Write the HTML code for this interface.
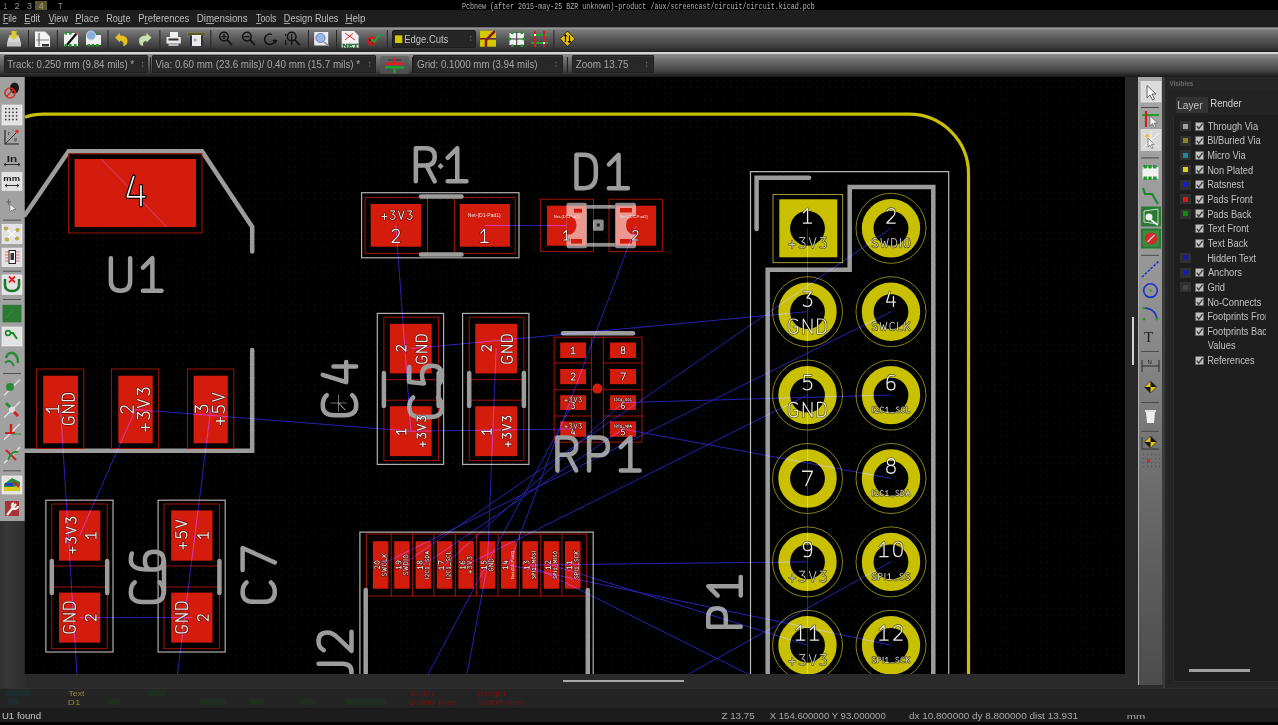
<!DOCTYPE html>
<html><head><meta charset="utf-8"><style>
*{margin:0;padding:0;box-sizing:border-box}
html,body{width:1278px;height:725px;overflow:hidden;background:#000;font-family:"Liberation Sans",sans-serif}
.b{position:absolute}
.t{position:absolute;white-space:pre;line-height:1}
.menu{font-size:10.5px;color:#d6d6d6}
.menu u{text-decoration:underline}
</style></head><body>
<div class="b" style="left:0px;top:0px;width:1278px;height:10px;background:#000"></div>
<div class="b" style="left:35px;top:1px;width:12px;height:9px;background:#5a5630"></div>
<div class="b" style="left:0px;top:10px;width:1278px;height:16.5px;background:#1e1e1e"></div>
<div class="b" style="left:0px;top:26.5px;width:1278px;height:26px;background:linear-gradient(#3a3a3a 0px,#a0a0a0 1px,#7a7a7a 3px,#5e5e5e 10px,#3c3c3c 20px,#262626 24px,#1c1c1c 26px)"></div>
<div class="b" style="left:0px;top:52px;width:1278px;height:1.6px;background:#d4d4d4"></div>
<div class="b" style="left:0px;top:54px;width:1278px;height:23px;background:linear-gradient(#8e8e8e 0px,#6e6e6e 6px,#444 17px,#262626 21px,#1a1a1a 23px)"></div>
<div class="b" style="left:4px;top:55.2px;width:144px;height:17.5px;background:#282828;border:1px solid #202020;border-radius:1px;box-shadow:inset 0 1px 0 #333"></div>
<div class="b" style="left:151.5px;top:55.2px;width:224.0px;height:17.5px;background:#282828;border:1px solid #202020;border-radius:1px;box-shadow:inset 0 1px 0 #333"></div>
<div class="b" style="left:413px;top:55.2px;width:149.5px;height:17.5px;background:#282828;border:1px solid #202020;border-radius:1px;box-shadow:inset 0 1px 0 #333"></div>
<div class="b" style="left:572px;top:55.2px;width:82px;height:17.5px;background:#282828;border:1px solid #202020;border-radius:1px;box-shadow:inset 0 1px 0 #333"></div>
<div class="b" style="left:149.5px;top:57px;width:1px;height:16px;background:#1e1e1e"></div>
<div class="b" style="left:411.5px;top:57px;width:1px;height:16px;background:#1e1e1e"></div>
<div class="b" style="left:567px;top:57px;width:1px;height:16px;background:#1e1e1e"></div>
<div class="b" style="left:380px;top:55.5px;width:28.5px;height:18px;background:linear-gradient(#666,#4a4a4a);border-radius:2px"></div>
<div class="b" style="left:391.5px;top:30px;width:84.5px;height:17.6px;background:#262626;border:1px solid #1c1c1c;border-radius:2px"></div>
<div class="b" style="left:0px;top:77px;width:24.5px;height:443.5px;background:#a2a2a2"></div>
<div class="b" style="left:0px;top:520.5px;width:24.5px;height:167.5px;background:linear-gradient(90deg,#303030,#383838 8px,#2e2e2e 24px)"></div>
<div class="b" style="left:1125px;top:77px;width:12.5px;height:611px;background:#282828"></div>
<div class="b" style="left:24.5px;top:674px;width:1113px;height:14px;background:#2a2a2a"></div>
<div class="b" style="left:1137.5px;top:77px;width:25px;height:608px;background:linear-gradient(#a6a6a6 0%,#949494 35%,#747474 60%,#5e5e5e 80%,#4c4c4c 100%);border-left:1px solid #b4b4b4;border-right:1px solid #3a3a3a"></div>
<div class="b" style="left:1137.5px;top:685px;width:25px;height:3px;background:#2a2a2a"></div>
<div class="b" style="left:1162.5px;top:77px;width:115.5px;height:611px;background:#262626"></div>
<div class="b" style="left:1162.5px;top:77px;width:2px;height:611px;background:#3a3a3a"></div>
<div class="b" style="left:1167.5px;top:91px;width:110.5px;height:593px;background:#232323"></div>
<div class="b" style="left:1173px;top:115px;width:105px;height:567px;background:#1e1e1e;border-left:1px solid #2c2c2c;border-bottom:1px solid #2c2c2c"></div>
<div class="b" style="left:1176px;top:97px;width:32px;height:16px;background:#333"></div>
<div class="b" style="left:1180px;top:121.0px;width:11px;height:10px;background:#303030"></div>
<div class="b" style="left:1183px;top:123.5px;width:5px;height:5px;background:#a0a0a0"></div>
<div class="b" style="left:1195px;top:121.5px;width:9px;height:9px;background:#c0c0c0;border:1px solid #6a6a6a;border-radius:1px"></div>
<div class="b" style="left:1180px;top:135.65px;width:11px;height:10px;background:#303030"></div>
<div class="b" style="left:1183px;top:138.15px;width:5px;height:5px;background:#8a8420"></div>
<div class="b" style="left:1195px;top:136.15px;width:9px;height:9px;background:#c0c0c0;border:1px solid #6a6a6a;border-radius:1px"></div>
<div class="b" style="left:1180px;top:150.3px;width:11px;height:10px;background:#303030"></div>
<div class="b" style="left:1183px;top:152.8px;width:5px;height:5px;background:#1a8a98"></div>
<div class="b" style="left:1195px;top:150.8px;width:9px;height:9px;background:#c0c0c0;border:1px solid #6a6a6a;border-radius:1px"></div>
<div class="b" style="left:1180px;top:164.95px;width:11px;height:10px;background:#303030"></div>
<div class="b" style="left:1183px;top:167.45px;width:5px;height:5px;background:#d8d020"></div>
<div class="b" style="left:1195px;top:165.45px;width:9px;height:9px;background:#c0c0c0;border:1px solid #6a6a6a;border-radius:1px"></div>
<div class="b" style="left:1180px;top:179.6px;width:11px;height:10px;background:#303030"></div>
<div class="b" style="left:1183px;top:182.1px;width:5px;height:5px;background:#1818d8"></div>
<div class="b" style="left:1195px;top:180.1px;width:9px;height:9px;background:#c0c0c0;border:1px solid #6a6a6a;border-radius:1px"></div>
<div class="b" style="left:1180px;top:194.25px;width:11px;height:10px;background:#303030"></div>
<div class="b" style="left:1183px;top:196.75px;width:5px;height:5px;background:#d81818"></div>
<div class="b" style="left:1195px;top:194.75px;width:9px;height:9px;background:#c0c0c0;border:1px solid #6a6a6a;border-radius:1px"></div>
<div class="b" style="left:1180px;top:208.9px;width:11px;height:10px;background:#303030"></div>
<div class="b" style="left:1183px;top:211.4px;width:5px;height:5px;background:#108a10"></div>
<div class="b" style="left:1195px;top:209.4px;width:9px;height:9px;background:#c0c0c0;border:1px solid #6a6a6a;border-radius:1px"></div>
<div class="b" style="left:1195px;top:224.05px;width:9px;height:9px;background:#c0c0c0;border:1px solid #6a6a6a;border-radius:1px"></div>
<div class="b" style="left:1195px;top:238.7px;width:9px;height:9px;background:#c0c0c0;border:1px solid #6a6a6a;border-radius:1px"></div>
<div class="b" style="left:1180px;top:252.85000000000002px;width:11px;height:10px;background:#303030"></div>
<div class="b" style="left:1183px;top:255.35000000000002px;width:5px;height:5px;background:#1818b0"></div>
<div class="b" style="left:1180px;top:267.5px;width:11px;height:10px;background:#303030"></div>
<div class="b" style="left:1183px;top:270.0px;width:5px;height:5px;background:#1818c8"></div>
<div class="b" style="left:1195px;top:268.0px;width:9px;height:9px;background:#c0c0c0;border:1px solid #6a6a6a;border-radius:1px"></div>
<div class="b" style="left:1180px;top:282.15px;width:11px;height:10px;background:#303030"></div>
<div class="b" style="left:1183px;top:284.65px;width:5px;height:5px;background:#444"></div>
<div class="b" style="left:1195px;top:282.65px;width:9px;height:9px;background:#c0c0c0;border:1px solid #6a6a6a;border-radius:1px"></div>
<div class="b" style="left:1195px;top:297.3px;width:9px;height:9px;background:#c0c0c0;border:1px solid #6a6a6a;border-radius:1px"></div>
<div class="b" style="left:1195px;top:311.95000000000005px;width:9px;height:9px;background:#c0c0c0;border:1px solid #6a6a6a;border-radius:1px"></div>
<div class="b" style="left:1195px;top:326.6px;width:9px;height:9px;background:#c0c0c0;border:1px solid #6a6a6a;border-radius:1px"></div>
<div class="b" style="left:1195px;top:355.9px;width:9px;height:9px;background:#c0c0c0;border:1px solid #6a6a6a;border-radius:1px"></div>
<div class="b" style="left:1189px;top:669px;width:61px;height:2.5px;background:#a0a0a0"></div>
<div class="b" style="left:0px;top:688px;width:1278px;height:20px;background:#242424"></div>
<div class="b" style="left:0px;top:688px;width:1278px;height:1px;background:#2e2e2e"></div>
<div class="b" style="left:0px;top:708px;width:1278px;height:14px;background:#1c1c1c"></div>
<div class="b" style="left:0px;top:722px;width:1278px;height:3px;background:#000"></div>
<div class="b" style="left:5px;top:690px;width:26px;height:6px;background:#173838;opacity:0.45"></div>
<div class="b" style="left:8px;top:699px;width:10px;height:6px;background:#173838;opacity:0.45"></div>
<div class="b" style="left:108px;top:699px;width:12px;height:6px;background:#1d3a1d;opacity:0.45"></div>
<div class="b" style="left:148px;top:690px;width:18px;height:6px;background:#1d3a1d;opacity:0.45"></div>
<div class="b" style="left:200px;top:699px;width:26px;height:6px;background:#1d3a1d;opacity:0.45"></div>
<div class="b" style="left:250px;top:699px;width:14px;height:6px;background:#1d3a1d;opacity:0.45"></div>
<div class="b" style="left:300px;top:699px;width:16px;height:6px;background:#1d3a1d;opacity:0.45"></div>
<div class="b" style="left:346px;top:699px;width:40px;height:6px;background:#1d3a1d;opacity:0.45"></div>
<div class="b" style="left:563px;top:680px;width:121px;height:2px;background:#a8a8a8"></div>
<div class="b" style="left:1131.5px;top:317px;width:2.5px;height:48px;background:#cfcfcf"></div>
<svg style="position:absolute;left:0;top:0;will-change:transform" width="1278" height="725" viewBox="0 0 1278 725">
<defs><clipPath id="cv"><rect x="24.5" y="77" width="1100.5" height="597"/></clipPath>
<pattern id="dots" x="4" y="1" width="6.6" height="6.6" patternUnits="userSpaceOnUse"><rect x="0" y="0" width="1" height="1" fill="#181818"/></pattern></defs>
<g clip-path="url(#cv)">
<rect x="24.5" y="77" width="1100.5" height="597" fill="#000"/>
<rect x="24.5" y="77" width="1100.5" height="597" fill="url(#dots)"/>
<path d="M25,117.2 Q33,114.2 44,114.2 L909,114.2 A59.5,59.5 0 0 1 968.5,173.7 L968.5,680" fill="none" stroke="#c8c000" stroke-width="3.2"/>
<polyline points="25.0,215.0 68.6,151.3 202.0,151.3 252.2,227.0 252.2,251.5" fill="none" stroke="#9c9c9c" stroke-width="4.5" stroke-linecap="round" stroke-linejoin="miter"/>
<rect x="68.6" y="153.8" width="133.4" height="79.2" fill="none" stroke="#a01408" stroke-width="1" />
<rect x="74.6" y="159.0" width="121.4" height="68.0" fill="#d41c0c" stroke="none" stroke-width="1" />
<line x1="101.0" y1="159.0" x2="167.0" y2="227.0" stroke="#e04a9a" stroke-width="0.8" stroke-linecap="butt"/>
<g transform="translate(136.20,274.50) rotate(0) scale(3.2700)" fill="none" stroke="#9c9c9c" stroke-width="1.376" stroke-linecap="round" stroke-linejoin="round" ><path transform="translate(-7.75,-5.00)" d="M0,0 L0,7 Q0,10 2.95,10 Q5.9,10 5.9,7 L5.9,0"/><path transform="translate(2.05,-5.00)" d="M0,2.9 L2.9,0 L2.9,10 M0,10 L5.7,10"/></g>
<polyline points="25.0,450.8 252.2,450.8 252.2,350.0" fill="none" stroke="#9c9c9c" stroke-width="4.5" stroke-linecap="round" stroke-linejoin="miter"/>
<rect x="36.6" y="369.0" width="47.2" height="79.5" fill="none" stroke="#a01408" stroke-width="1" />
<rect x="43.2" y="375.7" width="34.8" height="67.6" fill="#d41c0c" stroke="none" stroke-width="1" />
<rect x="111.4" y="369.0" width="47.3" height="79.5" fill="none" stroke="#a01408" stroke-width="1" />
<rect x="118.3" y="375.7" width="34.4" height="67.6" fill="#d41c0c" stroke="none" stroke-width="1" />
<rect x="187.4" y="369.0" width="46.4" height="79.5" fill="none" stroke="#a01408" stroke-width="1" />
<rect x="193.6" y="375.7" width="34.2" height="67.6" fill="#d41c0c" stroke="none" stroke-width="1" />
<rect x="45.9" y="500.2" width="67.1" height="151.8" fill="none" stroke="#b0b0b0" stroke-width="1.2" />
<rect x="51.8" y="504.0" width="55.4" height="144.7" fill="none" stroke="#a01408" stroke-width="1" />
<rect x="59.0" y="510.4" width="41.3" height="50.3" fill="#d41c0c" stroke="none" stroke-width="1" />
<rect x="59.0" y="592.6" width="41.3" height="50.0" fill="#d41c0c" stroke="none" stroke-width="1" />
<line x1="51.8" y1="566.0" x2="107.2" y2="566.0" stroke="#a01408" stroke-width="1" stroke-linecap="round"/>
<line x1="51.8" y1="587.0" x2="107.2" y2="587.0" stroke="#a01408" stroke-width="1" stroke-linecap="round"/>
<line x1="51.8" y1="561.0" x2="51.8" y2="593.0" stroke="#9c9c9c" stroke-width="4.5" stroke-linecap="round"/>
<line x1="107.2" y1="561.0" x2="107.2" y2="593.0" stroke="#9c9c9c" stroke-width="4.5" stroke-linecap="round"/>
<rect x="158.1" y="500.2" width="67.1" height="151.8" fill="none" stroke="#b0b0b0" stroke-width="1.2" />
<rect x="164.0" y="504.0" width="55.4" height="144.7" fill="none" stroke="#a01408" stroke-width="1" />
<rect x="171.2" y="510.4" width="41.3" height="50.3" fill="#d41c0c" stroke="none" stroke-width="1" />
<rect x="171.2" y="592.6" width="41.3" height="50.0" fill="#d41c0c" stroke="none" stroke-width="1" />
<line x1="164.0" y1="566.0" x2="219.4" y2="566.0" stroke="#a01408" stroke-width="1" stroke-linecap="round"/>
<line x1="164.0" y1="587.0" x2="219.4" y2="587.0" stroke="#a01408" stroke-width="1" stroke-linecap="round"/>
<line x1="164.0" y1="561.0" x2="164.0" y2="593.0" stroke="#9c9c9c" stroke-width="4.5" stroke-linecap="round"/>
<line x1="219.4" y1="561.0" x2="219.4" y2="593.0" stroke="#9c9c9c" stroke-width="4.5" stroke-linecap="round"/>
<g transform="translate(147.20,576.90) rotate(-90) scale(3.2800)" fill="none" stroke="#9c9c9c" stroke-width="1.372" stroke-linecap="round" stroke-linejoin="round" ><path transform="translate(-7.65,-5.00)" d="M6,1.2 Q5,0 3,0 Q0,0 0,3.5 L0,6.5 Q0,10 3,10 Q5,10 6,8.8"/><path transform="translate(2.25,-5.00)" d="M4.9,0.3 Q4,0 2.9,0 Q0,0 0,5 L0,6.8 Q0,10 2.7,10 Q5.4,10 5.4,7.1 Q5.4,4.3 2.7,4.3 Q0.6,4.3 0,5.8"/></g>
<g transform="translate(258.70,574.90) rotate(-90) scale(3.2200)" fill="none" stroke="#9c9c9c" stroke-width="1.398" stroke-linecap="round" stroke-linejoin="round" ><path transform="translate(-8.35,-5.00)" d="M6,1.2 Q5,0 3,0 Q0,0 0,3.5 L0,6.5 Q0,10 3,10 Q5,10 6,8.8"/><path transform="translate(1.55,-5.00)" d="M0,0 L6.8,0 L2.3,10"/></g>
<rect x="361.6" y="192.7" width="157.4" height="65.1" fill="none" stroke="#b0b0b0" stroke-width="1.2" />
<rect x="365.0" y="197.6" width="150.2" height="55.8" fill="none" stroke="#a01408" stroke-width="1" />
<line x1="427.5" y1="197.6" x2="427.5" y2="253.4" stroke="#a01408" stroke-width="1" stroke-linecap="round"/>
<line x1="454.6" y1="197.6" x2="454.6" y2="253.4" stroke="#a01408" stroke-width="1" stroke-linecap="round"/>
<rect x="370.7" y="204.0" width="50.3" height="42.7" fill="#d41c0c" stroke="none" stroke-width="1" />
<rect x="459.7" y="204.0" width="50.3" height="42.7" fill="#d41c0c" stroke="none" stroke-width="1" />
<line x1="421.0" y1="196.6" x2="461.5" y2="196.6" stroke="#9c9c9c" stroke-width="4.5" stroke-linecap="round"/>
<line x1="421.0" y1="254.5" x2="461.5" y2="254.5" stroke="#9c9c9c" stroke-width="4.5" stroke-linecap="round"/>
<g transform="translate(441.20,164.80) rotate(0) scale(3.3100)" fill="none" stroke="#9c9c9c" stroke-width="1.360" stroke-linecap="round" stroke-linejoin="round" ><path transform="translate(-7.65,-5.00)" d="M0,10 L0,0 L3,0 Q5.7,0 5.7,2.6 Q5.7,5.2 3,5.2 L0,5.2 M3.2,5.2 L5.7,10"/><path transform="translate(1.95,-5.00)" d="M0,2.9 L2.9,0 L2.9,10 M0,10 L5.7,10"/></g>
<rect x="438.4" y="164" width="4.4" height="4.4" fill="#9c9c9c" transform="rotate(45 440.6 166.2)"/>
<rect x="540.3" y="199.2" width="53.2" height="52.2" fill="none" stroke="#a01408" stroke-width="1" />
<rect x="609.0" y="199.2" width="53.4" height="52.2" fill="none" stroke="#a01408" stroke-width="1" />
<rect x="547.0" y="205.7" width="39.3" height="40.0" fill="#d41c0c" stroke="none" stroke-width="1" />
<rect x="616.0" y="205.7" width="40.0" height="40.0" fill="#d41c0c" stroke="none" stroke-width="1" />
<g transform="translate(602.20,171.50) rotate(0) scale(3.3400)" fill="none" stroke="#9c9c9c" stroke-width="1.347" stroke-linecap="round" stroke-linejoin="round" ><path transform="translate(-7.70,-5.00)" d="M0,10 L0,0 L2.2,0 Q5.8,0 5.8,4 L5.8,6 Q5.8,10 2.2,10 L0,10"/><path transform="translate(2.00,-5.00)" d="M0,2.9 L2.9,0 L2.9,10 M0,10 L5.7,10"/></g>
<g fill="#ffffff" fill-opacity="0.55"><rect x="566.5" y="202.7" width="20.5" height="45.5" rx="2"/><rect x="615" y="202.7" width="21" height="45.5" rx="2"/><rect x="587" y="205" width="28" height="3.7"/><rect x="587" y="242.9" width="28" height="3.8"/><rect x="593" y="219.4" width="10.7" height="11.3" rx="1.5"/></g>
<rect x="596.8" y="223.5" width="3" height="3" fill="#222"/>
<g fill="#d41c0c"><rect x="574" y="208.7" width="8" height="4"/><rect x="571" y="239" width="11" height="4.6"/><path d="M566.5,216 h4 q6,3 6,9.2 q0,6.2 -6,9.3 h-4 Z"/><rect x="620" y="208" width="12" height="4.5"/><rect x="620" y="239" width="12" height="4.6"/><path d="M636,216 h-4 q-6,3 -6,9.2 q0,6.2 6,9.3 h4 Z"/></g>
<rect x="377.3" y="313.4" width="66.3" height="151.0" fill="none" stroke="#b0b0b0" stroke-width="1.2" />
<rect x="383.9" y="317.2" width="54.7" height="143.4" fill="none" stroke="#a01408" stroke-width="1" />
<rect x="390.0" y="323.8" width="41.7" height="49.6" fill="#d41c0c" stroke="none" stroke-width="1" />
<rect x="390.0" y="406.2" width="41.7" height="49.9" fill="#d41c0c" stroke="none" stroke-width="1" />
<line x1="383.9" y1="379.7" x2="438.6" y2="379.7" stroke="#a01408" stroke-width="1" stroke-linecap="round"/>
<line x1="383.9" y1="400.2" x2="438.6" y2="400.2" stroke="#a01408" stroke-width="1" stroke-linecap="round"/>
<line x1="383.9" y1="373.0" x2="383.9" y2="406.0" stroke="#9c9c9c" stroke-width="4.5" stroke-linecap="round"/>
<line x1="438.6" y1="373.0" x2="438.6" y2="406.0" stroke="#9c9c9c" stroke-width="4.5" stroke-linecap="round"/>
<rect x="462.6" y="313.4" width="66.3" height="151.0" fill="none" stroke="#b0b0b0" stroke-width="1.2" />
<rect x="469.2" y="317.2" width="54.7" height="143.4" fill="none" stroke="#a01408" stroke-width="1" />
<rect x="475.3" y="323.8" width="41.7" height="49.6" fill="#d41c0c" stroke="none" stroke-width="1" />
<rect x="475.3" y="406.2" width="41.7" height="49.9" fill="#d41c0c" stroke="none" stroke-width="1" />
<line x1="469.2" y1="379.7" x2="523.9" y2="379.7" stroke="#a01408" stroke-width="1" stroke-linecap="round"/>
<line x1="469.2" y1="400.2" x2="523.9" y2="400.2" stroke="#a01408" stroke-width="1" stroke-linecap="round"/>
<line x1="469.2" y1="373.0" x2="469.2" y2="406.0" stroke="#9c9c9c" stroke-width="4.5" stroke-linecap="round"/>
<line x1="523.9" y1="373.0" x2="523.9" y2="406.0" stroke="#9c9c9c" stroke-width="4.5" stroke-linecap="round"/>
<g transform="translate(339.50,388.70) rotate(-90) scale(3.3500)" fill="none" stroke="#9c9c9c" stroke-width="1.343" stroke-linecap="round" stroke-linejoin="round" ><path transform="translate(-7.95,-5.00)" d="M6,1.2 Q5,0 3,0 Q0,0 0,3.5 L0,6.5 Q0,10 3,10 Q5,10 6,8.8"/><path transform="translate(1.95,-5.00)" d="M2.2,0 L0,7 L6,7 M4.7,3.2 L4.7,10"/></g>
<g transform="translate(425.60,391.40) rotate(-90) scale(3.2700)" fill="none" stroke="#9c9c9c" stroke-width="1.376" stroke-linecap="round" stroke-linejoin="round" ><path transform="translate(-7.85,-5.00)" d="M6,1.2 Q5,0 3,0 Q0,0 0,3.5 L0,6.5 Q0,10 3,10 Q5,10 6,8.8"/><path transform="translate(2.05,-5.00)" d="M5.4,0 L0.8,0 L0.4,4.5 Q1.5,3.9 2.9,3.9 Q5.8,3.9 5.8,6.9 Q5.8,10 2.8,10 Q1,10 0,9"/></g>
<rect x="554.2" y="337.2" width="87.8" height="104.9" fill="none" stroke="#a01408" stroke-width="1" />
<line x1="591.4" y1="337.2" x2="591.4" y2="442.1" stroke="#a01408" stroke-width="1" stroke-linecap="round"/>
<line x1="603.3" y1="337.2" x2="603.3" y2="442.1" stroke="#a01408" stroke-width="1" stroke-linecap="round"/>
<line x1="554.2" y1="363.0" x2="591.4" y2="363.0" stroke="#a01408" stroke-width="1" stroke-linecap="round"/>
<line x1="603.3" y1="363.0" x2="642.0" y2="363.0" stroke="#a01408" stroke-width="1" stroke-linecap="round"/>
<line x1="554.2" y1="389.8" x2="591.4" y2="389.8" stroke="#a01408" stroke-width="1" stroke-linecap="round"/>
<line x1="603.3" y1="389.8" x2="642.0" y2="389.8" stroke="#a01408" stroke-width="1" stroke-linecap="round"/>
<line x1="554.2" y1="416.0" x2="591.4" y2="416.0" stroke="#a01408" stroke-width="1" stroke-linecap="round"/>
<line x1="603.3" y1="416.0" x2="642.0" y2="416.0" stroke="#a01408" stroke-width="1" stroke-linecap="round"/>
<rect x="560.2" y="342.5" width="25.8" height="15.5" fill="#d41c0c" stroke="none" stroke-width="1" />
<rect x="610.0" y="342.5" width="26.0" height="15.5" fill="#d41c0c" stroke="none" stroke-width="1" />
<rect x="560.2" y="369.0" width="25.8" height="15.2" fill="#d41c0c" stroke="none" stroke-width="1" />
<rect x="610.0" y="369.0" width="26.0" height="15.2" fill="#d41c0c" stroke="none" stroke-width="1" />
<rect x="560.2" y="395.2" width="25.8" height="14.8" fill="#d41c0c" stroke="none" stroke-width="1" />
<rect x="610.0" y="395.2" width="26.0" height="14.8" fill="#d41c0c" stroke="none" stroke-width="1" />
<rect x="560.2" y="421.3" width="25.8" height="15.5" fill="#d41c0c" stroke="none" stroke-width="1" />
<rect x="610.0" y="421.3" width="26.0" height="15.5" fill="#d41c0c" stroke="none" stroke-width="1" />
<circle cx="597.4" cy="388.6" r="5" fill="#d41c0c"/>
<line x1="563.0" y1="333.3" x2="633.0" y2="333.3" stroke="#9c9c9c" stroke-width="4.5" stroke-linecap="round"/>
<g transform="translate(598.50,454.00) rotate(0) scale(3.3000)" fill="none" stroke="#9c9c9c" stroke-width="1.364" stroke-linecap="round" stroke-linejoin="round" ><path transform="translate(-12.45,-5.00)" d="M0,10 L0,0 L3,0 Q5.7,0 5.7,2.6 Q5.7,5.2 3,5.2 L0,5.2 M3.2,5.2 L5.7,10"/><path transform="translate(-2.85,-5.00)" d="M0,10 L0,0 L3,0 Q5.7,0 5.7,2.7 Q5.7,5.4 3,5.4 L0,5.4"/><path transform="translate(6.75,-5.00)" d="M0,2.9 L2.9,0 L2.9,10 M0,10 L5.7,10"/></g>
<polyline points="359.9,680.0 359.9,532.2 593.2,532.2 593.2,680.0" fill="none" stroke="#b0b0b0" stroke-width="1.2" stroke-linecap="round" stroke-linejoin="miter"/>
<rect x="366.4" y="534.0" width="220.3" height="62.0" fill="none" stroke="#a01408" stroke-width="1" />
<rect x="372.9" y="541.2" width="15.5" height="47.5" fill="#d41c0c" stroke="none" stroke-width="1" />
<rect x="394.2" y="541.2" width="15.5" height="47.5" fill="#d41c0c" stroke="none" stroke-width="1" />
<line x1="391.2" y1="534.0" x2="391.2" y2="596.0" stroke="#a01408" stroke-width="1" stroke-linecap="round"/>
<rect x="415.6" y="541.2" width="15.5" height="47.5" fill="#d41c0c" stroke="none" stroke-width="1" />
<line x1="412.6" y1="534.0" x2="412.6" y2="596.0" stroke="#a01408" stroke-width="1" stroke-linecap="round"/>
<rect x="436.9" y="541.2" width="15.5" height="47.5" fill="#d41c0c" stroke="none" stroke-width="1" />
<line x1="433.9" y1="534.0" x2="433.9" y2="596.0" stroke="#a01408" stroke-width="1" stroke-linecap="round"/>
<rect x="458.3" y="541.2" width="15.5" height="47.5" fill="#d41c0c" stroke="none" stroke-width="1" />
<line x1="455.3" y1="534.0" x2="455.3" y2="596.0" stroke="#a01408" stroke-width="1" stroke-linecap="round"/>
<rect x="479.6" y="541.2" width="15.5" height="47.5" fill="#d41c0c" stroke="none" stroke-width="1" />
<line x1="476.6" y1="534.0" x2="476.6" y2="596.0" stroke="#a01408" stroke-width="1" stroke-linecap="round"/>
<rect x="501.0" y="541.2" width="15.5" height="47.5" fill="#d41c0c" stroke="none" stroke-width="1" />
<line x1="498.0" y1="534.0" x2="498.0" y2="596.0" stroke="#a01408" stroke-width="1" stroke-linecap="round"/>
<rect x="522.4" y="541.2" width="15.5" height="47.5" fill="#d41c0c" stroke="none" stroke-width="1" />
<line x1="519.4" y1="534.0" x2="519.4" y2="596.0" stroke="#a01408" stroke-width="1" stroke-linecap="round"/>
<rect x="543.7" y="541.2" width="15.5" height="47.5" fill="#d41c0c" stroke="none" stroke-width="1" />
<line x1="540.7" y1="534.0" x2="540.7" y2="596.0" stroke="#a01408" stroke-width="1" stroke-linecap="round"/>
<rect x="565.0" y="541.2" width="15.5" height="47.5" fill="#d41c0c" stroke="none" stroke-width="1" />
<line x1="562.0" y1="534.0" x2="562.0" y2="596.0" stroke="#a01408" stroke-width="1" stroke-linecap="round"/>
<line x1="365.7" y1="590.0" x2="365.7" y2="680.0" stroke="#9c9c9c" stroke-width="4.5" stroke-linecap="round"/>
<line x1="587.8" y1="590.0" x2="587.8" y2="680.0" stroke="#9c9c9c" stroke-width="4.5" stroke-linecap="round"/>
<g transform="translate(335.00,656.00) rotate(-90) scale(3.3000)" fill="none" stroke="#9c9c9c" stroke-width="1.364" stroke-linecap="round" stroke-linejoin="round" ><path transform="translate(-7.35,-5.00)" d="M5,0 L5,7.3 Q5,10 2.5,10 Q0.7,10 0,8.8"/><path transform="translate(1.55,-5.00)" d="M0.2,1.6 Q1,0 2.9,0 Q5.6,0 5.6,2.7 Q5.6,4.3 4,5.8 L0,10 L5.8,10"/></g>
<polyline points="750.5,680.0 750.5,171.6 948.7,171.6 948.7,680.0" fill="none" stroke="#b8b8b8" stroke-width="1.2" stroke-linecap="round" stroke-linejoin="miter"/>
<polyline points="756.6,229.0 756.6,177.8 809.0,177.8" fill="none" stroke="#9c9c9c" stroke-width="4.5" stroke-linecap="round" stroke-linejoin="miter"/>
<polyline points="767.7,680.0 767.7,269.7 849.7,269.7 849.7,187.0 933.3,187.0 933.3,680.0" fill="none" stroke="#9c9c9c" stroke-width="4.5" stroke-linecap="round" stroke-linejoin="miter"/>
<g transform="translate(724.50,601.90) rotate(-90) scale(3.2500)" fill="none" stroke="#9c9c9c" stroke-width="1.385" stroke-linecap="round" stroke-linejoin="round" ><path transform="translate(-7.65,-5.00)" d="M0,10 L0,0 L3,0 Q5.7,0 5.7,2.7 Q5.7,5.4 3,5.4 L0,5.4"/><path transform="translate(1.95,-5.00)" d="M0,2.9 L2.9,0 L2.9,10 M0,10 L5.7,10"/></g>
<rect x="773.0" y="194.4" width="69.7" height="68.3" fill="none" stroke="#c8c040" stroke-width="0.8" />
<rect x="779.3" y="199.3" width="58.0" height="58.0" fill="#c8c000" stroke="none" stroke-width="1" />
<circle cx="807.5" cy="228.3" r="17.4" fill="#000"/>
<circle cx="891.0" cy="228.3" r="35" fill="none" stroke="#a8a020" stroke-width="0.8"/>
<circle cx="891.0" cy="228.3" r="23.3" fill="none" stroke="#c8c000" stroke-width="11.8"/>
<circle cx="807.5" cy="311.7" r="35" fill="none" stroke="#a8a020" stroke-width="0.8"/>
<circle cx="807.5" cy="311.7" r="23.3" fill="none" stroke="#c8c000" stroke-width="11.8"/>
<circle cx="891.0" cy="311.7" r="35" fill="none" stroke="#a8a020" stroke-width="0.8"/>
<circle cx="891.0" cy="311.7" r="23.3" fill="none" stroke="#c8c000" stroke-width="11.8"/>
<circle cx="807.5" cy="395.1" r="35" fill="none" stroke="#a8a020" stroke-width="0.8"/>
<circle cx="807.5" cy="395.1" r="23.3" fill="none" stroke="#c8c000" stroke-width="11.8"/>
<circle cx="891.0" cy="395.1" r="35" fill="none" stroke="#a8a020" stroke-width="0.8"/>
<circle cx="891.0" cy="395.1" r="23.3" fill="none" stroke="#c8c000" stroke-width="11.8"/>
<circle cx="807.5" cy="478.5" r="35" fill="none" stroke="#a8a020" stroke-width="0.8"/>
<circle cx="807.5" cy="478.5" r="23.3" fill="none" stroke="#c8c000" stroke-width="11.8"/>
<circle cx="891.0" cy="478.5" r="35" fill="none" stroke="#a8a020" stroke-width="0.8"/>
<circle cx="891.0" cy="478.5" r="23.3" fill="none" stroke="#c8c000" stroke-width="11.8"/>
<circle cx="807.5" cy="561.9" r="35" fill="none" stroke="#a8a020" stroke-width="0.8"/>
<circle cx="807.5" cy="561.9" r="23.3" fill="none" stroke="#c8c000" stroke-width="11.8"/>
<circle cx="891.0" cy="561.9" r="35" fill="none" stroke="#a8a020" stroke-width="0.8"/>
<circle cx="891.0" cy="561.9" r="23.3" fill="none" stroke="#c8c000" stroke-width="11.8"/>
<circle cx="807.5" cy="645.3" r="35" fill="none" stroke="#a8a020" stroke-width="0.8"/>
<circle cx="807.5" cy="645.3" r="23.3" fill="none" stroke="#c8c000" stroke-width="11.8"/>
<circle cx="891.0" cy="645.3" r="35" fill="none" stroke="#a8a020" stroke-width="0.8"/>
<circle cx="891.0" cy="645.3" r="23.3" fill="none" stroke="#c8c000" stroke-width="11.8"/>
<g stroke="#2222b0" stroke-width="1" style="mix-blend-mode:screen">
<line x1="60.7" y1="411.0" x2="77.3" y2="680.0"/>
<line x1="135.5" y1="409.5" x2="79.6" y2="535.5"/>
<line x1="210.7" y1="409.5" x2="177.0" y2="678.0"/>
<line x1="79.6" y1="617.6" x2="191.8" y2="617.6"/>
<line x1="135.5" y1="409.5" x2="410.9" y2="431.2"/>
<line x1="410.9" y1="431.2" x2="573.1" y2="429.0"/>
<line x1="410.9" y1="348.6" x2="807.5" y2="311.7"/>
<line x1="395.9" y1="225.4" x2="410.9" y2="431.2"/>
<line x1="484.9" y1="225.4" x2="566.6" y2="225.7"/>
<line x1="636.0" y1="225.7" x2="508.7" y2="565.0"/>
<line x1="496.2" y1="348.6" x2="487.4" y2="565.0"/>
<line x1="487.4" y1="565.0" x2="466.0" y2="680.0"/>
<line x1="623.0" y1="402.6" x2="891.0" y2="395.0"/>
<line x1="623.0" y1="429.0" x2="891.0" y2="478.4"/>
<line x1="380.6" y1="565.0" x2="891.0" y2="311.7"/>
<line x1="402.0" y1="565.0" x2="891.0" y2="228.3"/>
<line x1="423.3" y1="565.0" x2="623.0" y2="429.0"/>
<line x1="444.7" y1="565.0" x2="623.0" y2="402.6"/>
<line x1="530.0" y1="565.0" x2="807.5" y2="561.8"/>
<line x1="551.4" y1="565.0" x2="807.5" y2="645.2"/>
<line x1="508.7" y1="565.0" x2="891.0" y2="645.2"/>
<line x1="530.0" y1="565.0" x2="760.0" y2="680.0"/>
<line x1="660.0" y1="690.0" x2="891.0" y2="561.8"/>
<line x1="807.5" y1="228.3" x2="807.5" y2="680.0"/>
<line x1="466.0" y1="565.0" x2="807.5" y2="395.0"/>
<line x1="425.0" y1="680.0" x2="573.1" y2="402.6"/>
</g>
<g stroke="#d8d8d8" stroke-width="0.9" fill="none"><path d="M338.5,394.7 V411.8 M330.4,403 H346.4" stroke="#808080"/><path d="M338.5,403 L345.3,410" /></g>
<g transform="translate(52.30,409.00) rotate(-90) scale(1.2500)" fill="none" stroke="#000" stroke-width="2.040" stroke-linecap="round" stroke-linejoin="round" stroke-opacity="0.55"><path transform="translate(-2.85,-5.00)" d="M0,2.9 L2.9,0 L2.9,10 M0,10 L5.7,10"/></g><g transform="translate(52.30,409.00) rotate(-90) scale(1.2500)" fill="none" stroke="#ececec" stroke-width="1.000" stroke-linecap="round" stroke-linejoin="round" ><path transform="translate(-2.85,-5.00)" d="M0,2.9 L2.9,0 L2.9,10 M0,10 L5.7,10"/></g>
<g transform="translate(68.20,409.00) rotate(-90) scale(1.2000)" fill="none" stroke="#000" stroke-width="2.125" stroke-linecap="round" stroke-linejoin="round" stroke-opacity="0.55"><path transform="translate(-12.80,-5.00)" d="M6,1.2 Q5,0 3,0 Q0,0 0,3.5 L0,6.5 Q0,10 3,10 Q6,10 6,7.5 L6,5.5 L3.5,5.5"/><path transform="translate(-2.90,-5.00)" d="M0,10 L0,0 L6,10 L6,0"/><path transform="translate(7.00,-5.00)" d="M0,10 L0,0 L2.2,0 Q5.8,0 5.8,4 L5.8,6 Q5.8,10 2.2,10 L0,10"/></g><g transform="translate(68.20,409.00) rotate(-90) scale(1.2000)" fill="none" stroke="#ececec" stroke-width="1.042" stroke-linecap="round" stroke-linejoin="round" ><path transform="translate(-12.80,-5.00)" d="M6,1.2 Q5,0 3,0 Q0,0 0,3.5 L0,6.5 Q0,10 3,10 Q6,10 6,7.5 L6,5.5 L3.5,5.5"/><path transform="translate(-2.90,-5.00)" d="M0,10 L0,0 L6,10 L6,0"/><path transform="translate(7.00,-5.00)" d="M0,10 L0,0 L2.2,0 Q5.8,0 5.8,4 L5.8,6 Q5.8,10 2.2,10 L0,10"/></g>
<g transform="translate(126.90,409.50) rotate(-90) scale(1.2500)" fill="none" stroke="#000" stroke-width="2.040" stroke-linecap="round" stroke-linejoin="round" stroke-opacity="0.55"><path transform="translate(-2.90,-5.00)" d="M0.2,1.6 Q1,0 2.9,0 Q5.6,0 5.6,2.7 Q5.6,4.3 4,5.8 L0,10 L5.8,10"/></g><g transform="translate(126.90,409.50) rotate(-90) scale(1.2500)" fill="none" stroke="#ececec" stroke-width="1.000" stroke-linecap="round" stroke-linejoin="round" ><path transform="translate(-2.90,-5.00)" d="M0.2,1.6 Q1,0 2.9,0 Q5.6,0 5.6,2.7 Q5.6,4.3 4,5.8 L0,10 L5.8,10"/></g>
<g transform="translate(143.50,409.50) rotate(-90) scale(1.2000)" fill="none" stroke="#000" stroke-width="2.125" stroke-linecap="round" stroke-linejoin="round" stroke-opacity="0.55"><path transform="translate(-17.85,-5.00)" d="M3,3.2 L3,10 M0,6.6 L6,6.6"/><path transform="translate(-7.95,-5.00)" d="M0.3,0 L5.5,0 L2.5,4.1 Q5.8,4 5.8,7 Q5.8,10 2.8,10 Q1,10 0,9"/><path transform="translate(1.75,-5.00)" d="M0,0 L3.2,10 L6.4,0"/><path transform="translate(12.05,-5.00)" d="M0.3,0 L5.5,0 L2.5,4.1 Q5.8,4 5.8,7 Q5.8,10 2.8,10 Q1,10 0,9"/></g><g transform="translate(143.50,409.50) rotate(-90) scale(1.2000)" fill="none" stroke="#ececec" stroke-width="1.042" stroke-linecap="round" stroke-linejoin="round" ><path transform="translate(-17.85,-5.00)" d="M3,3.2 L3,10 M0,6.6 L6,6.6"/><path transform="translate(-7.95,-5.00)" d="M0.3,0 L5.5,0 L2.5,4.1 Q5.8,4 5.8,7 Q5.8,10 2.8,10 Q1,10 0,9"/><path transform="translate(1.75,-5.00)" d="M0,0 L3.2,10 L6.4,0"/><path transform="translate(12.05,-5.00)" d="M0.3,0 L5.5,0 L2.5,4.1 Q5.8,4 5.8,7 Q5.8,10 2.8,10 Q1,10 0,9"/></g>
<g transform="translate(201.50,409.00) rotate(-90) scale(1.2500)" fill="none" stroke="#000" stroke-width="2.040" stroke-linecap="round" stroke-linejoin="round" stroke-opacity="0.55"><path transform="translate(-2.90,-5.00)" d="M0.3,0 L5.5,0 L2.5,4.1 Q5.8,4 5.8,7 Q5.8,10 2.8,10 Q1,10 0,9"/></g><g transform="translate(201.50,409.00) rotate(-90) scale(1.2500)" fill="none" stroke="#ececec" stroke-width="1.000" stroke-linecap="round" stroke-linejoin="round" ><path transform="translate(-2.90,-5.00)" d="M0.3,0 L5.5,0 L2.5,4.1 Q5.8,4 5.8,7 Q5.8,10 2.8,10 Q1,10 0,9"/></g>
<g transform="translate(218.50,409.00) rotate(-90) scale(1.2000)" fill="none" stroke="#000" stroke-width="2.125" stroke-linecap="round" stroke-linejoin="round" stroke-opacity="0.55"><path transform="translate(-13.00,-5.00)" d="M3,3.2 L3,10 M0,6.6 L6,6.6"/><path transform="translate(-3.10,-5.00)" d="M5.4,0 L0.8,0 L0.4,4.5 Q1.5,3.9 2.9,3.9 Q5.8,3.9 5.8,6.9 Q5.8,10 2.8,10 Q1,10 0,9"/><path transform="translate(6.60,-5.00)" d="M0,0 L3.2,10 L6.4,0"/></g><g transform="translate(218.50,409.00) rotate(-90) scale(1.2000)" fill="none" stroke="#ececec" stroke-width="1.042" stroke-linecap="round" stroke-linejoin="round" ><path transform="translate(-13.00,-5.00)" d="M3,3.2 L3,10 M0,6.6 L6,6.6"/><path transform="translate(-3.10,-5.00)" d="M5.4,0 L0.8,0 L0.4,4.5 Q1.5,3.9 2.9,3.9 Q5.8,3.9 5.8,6.9 Q5.8,10 2.8,10 Q1,10 0,9"/><path transform="translate(6.60,-5.00)" d="M0,0 L3.2,10 L6.4,0"/></g>
<g transform="translate(136.00,191.00) rotate(0) scale(2.9000)" fill="none" stroke="#000" stroke-width="1.379" stroke-linecap="round" stroke-linejoin="round" ><path transform="translate(-3.00,-5.00)" d="M2.2,0 L0,7 L6,7 M4.7,3.2 L4.7,10"/></g>
<g transform="translate(136.00,191.00) rotate(0) scale(2.9000)" fill="none" stroke="#000" stroke-width="1.034" stroke-linecap="round" stroke-linejoin="round" stroke-opacity="0.55"><path transform="translate(-3.00,-5.00)" d="M2.2,0 L0,7 L6,7 M4.7,3.2 L4.7,10"/></g><g transform="translate(136.00,191.00) rotate(0) scale(2.9000)" fill="none" stroke="#f4f4f4" stroke-width="0.586" stroke-linecap="round" stroke-linejoin="round" ><path transform="translate(-3.00,-5.00)" d="M2.2,0 L0,7 L6,7 M4.7,3.2 L4.7,10"/></g>
<g transform="translate(90.70,535.30) rotate(-90) scale(1.0500)" fill="none" stroke="#000" stroke-width="2.429" stroke-linecap="round" stroke-linejoin="round" stroke-opacity="0.55"><path transform="translate(-2.85,-5.00)" d="M0,2.9 L2.9,0 L2.9,10 M0,10 L5.7,10"/></g><g transform="translate(90.70,535.30) rotate(-90) scale(1.0500)" fill="none" stroke="#ececec" stroke-width="1.190" stroke-linecap="round" stroke-linejoin="round" ><path transform="translate(-2.85,-5.00)" d="M0,2.9 L2.9,0 L2.9,10 M0,10 L5.7,10"/></g>
<g transform="translate(90.70,617.80) rotate(-90) scale(1.0500)" fill="none" stroke="#000" stroke-width="2.429" stroke-linecap="round" stroke-linejoin="round" stroke-opacity="0.55"><path transform="translate(-2.90,-5.00)" d="M0.2,1.6 Q1,0 2.9,0 Q5.6,0 5.6,2.7 Q5.6,4.3 4,5.8 L0,10 L5.8,10"/></g><g transform="translate(90.70,617.80) rotate(-90) scale(1.0500)" fill="none" stroke="#ececec" stroke-width="1.190" stroke-linecap="round" stroke-linejoin="round" ><path transform="translate(-2.90,-5.00)" d="M0.2,1.6 Q1,0 2.9,0 Q5.6,0 5.6,2.7 Q5.6,4.3 4,5.8 L0,10 L5.8,10"/></g>
<g transform="translate(69.30,617.60) rotate(-90) scale(1.2000)" fill="none" stroke="#000" stroke-width="2.125" stroke-linecap="round" stroke-linejoin="round" stroke-opacity="0.55"><path transform="translate(-12.80,-5.00)" d="M6,1.2 Q5,0 3,0 Q0,0 0,3.5 L0,6.5 Q0,10 3,10 Q6,10 6,7.5 L6,5.5 L3.5,5.5"/><path transform="translate(-2.90,-5.00)" d="M0,10 L0,0 L6,10 L6,0"/><path transform="translate(7.00,-5.00)" d="M0,10 L0,0 L2.2,0 Q5.8,0 5.8,4 L5.8,6 Q5.8,10 2.2,10 L0,10"/></g><g transform="translate(69.30,617.60) rotate(-90) scale(1.2000)" fill="none" stroke="#ececec" stroke-width="1.042" stroke-linecap="round" stroke-linejoin="round" ><path transform="translate(-12.80,-5.00)" d="M6,1.2 Q5,0 3,0 Q0,0 0,3.5 L0,6.5 Q0,10 3,10 Q6,10 6,7.5 L6,5.5 L3.5,5.5"/><path transform="translate(-2.90,-5.00)" d="M0,10 L0,0 L6,10 L6,0"/><path transform="translate(7.00,-5.00)" d="M0,10 L0,0 L2.2,0 Q5.8,0 5.8,4 L5.8,6 Q5.8,10 2.2,10 L0,10"/></g>
<g transform="translate(202.90,535.30) rotate(-90) scale(1.0500)" fill="none" stroke="#000" stroke-width="2.429" stroke-linecap="round" stroke-linejoin="round" stroke-opacity="0.55"><path transform="translate(-2.85,-5.00)" d="M0,2.9 L2.9,0 L2.9,10 M0,10 L5.7,10"/></g><g transform="translate(202.90,535.30) rotate(-90) scale(1.0500)" fill="none" stroke="#ececec" stroke-width="1.190" stroke-linecap="round" stroke-linejoin="round" ><path transform="translate(-2.85,-5.00)" d="M0,2.9 L2.9,0 L2.9,10 M0,10 L5.7,10"/></g>
<g transform="translate(202.90,617.80) rotate(-90) scale(1.0500)" fill="none" stroke="#000" stroke-width="2.429" stroke-linecap="round" stroke-linejoin="round" stroke-opacity="0.55"><path transform="translate(-2.90,-5.00)" d="M0.2,1.6 Q1,0 2.9,0 Q5.6,0 5.6,2.7 Q5.6,4.3 4,5.8 L0,10 L5.8,10"/></g><g transform="translate(202.90,617.80) rotate(-90) scale(1.0500)" fill="none" stroke="#ececec" stroke-width="1.190" stroke-linecap="round" stroke-linejoin="round" ><path transform="translate(-2.90,-5.00)" d="M0.2,1.6 Q1,0 2.9,0 Q5.6,0 5.6,2.7 Q5.6,4.3 4,5.8 L0,10 L5.8,10"/></g>
<g transform="translate(181.50,617.60) rotate(-90) scale(1.2000)" fill="none" stroke="#000" stroke-width="2.125" stroke-linecap="round" stroke-linejoin="round" stroke-opacity="0.55"><path transform="translate(-12.80,-5.00)" d="M6,1.2 Q5,0 3,0 Q0,0 0,3.5 L0,6.5 Q0,10 3,10 Q6,10 6,7.5 L6,5.5 L3.5,5.5"/><path transform="translate(-2.90,-5.00)" d="M0,10 L0,0 L6,10 L6,0"/><path transform="translate(7.00,-5.00)" d="M0,10 L0,0 L2.2,0 Q5.8,0 5.8,4 L5.8,6 Q5.8,10 2.2,10 L0,10"/></g><g transform="translate(181.50,617.60) rotate(-90) scale(1.2000)" fill="none" stroke="#ececec" stroke-width="1.042" stroke-linecap="round" stroke-linejoin="round" ><path transform="translate(-12.80,-5.00)" d="M6,1.2 Q5,0 3,0 Q0,0 0,3.5 L0,6.5 Q0,10 3,10 Q6,10 6,7.5 L6,5.5 L3.5,5.5"/><path transform="translate(-2.90,-5.00)" d="M0,10 L0,0 L6,10 L6,0"/><path transform="translate(7.00,-5.00)" d="M0,10 L0,0 L2.2,0 Q5.8,0 5.8,4 L5.8,6 Q5.8,10 2.2,10 L0,10"/></g>
<g transform="translate(71.00,535.30) rotate(-90) scale(1.0000)" fill="none" stroke="#000" stroke-width="2.550" stroke-linecap="round" stroke-linejoin="round" stroke-opacity="0.55"><path transform="translate(-17.85,-5.00)" d="M3,3.2 L3,10 M0,6.6 L6,6.6"/><path transform="translate(-7.95,-5.00)" d="M0.3,0 L5.5,0 L2.5,4.1 Q5.8,4 5.8,7 Q5.8,10 2.8,10 Q1,10 0,9"/><path transform="translate(1.75,-5.00)" d="M0,0 L3.2,10 L6.4,0"/><path transform="translate(12.05,-5.00)" d="M0.3,0 L5.5,0 L2.5,4.1 Q5.8,4 5.8,7 Q5.8,10 2.8,10 Q1,10 0,9"/></g><g transform="translate(71.00,535.30) rotate(-90) scale(1.0000)" fill="none" stroke="#ececec" stroke-width="1.250" stroke-linecap="round" stroke-linejoin="round" ><path transform="translate(-17.85,-5.00)" d="M3,3.2 L3,10 M0,6.6 L6,6.6"/><path transform="translate(-7.95,-5.00)" d="M0.3,0 L5.5,0 L2.5,4.1 Q5.8,4 5.8,7 Q5.8,10 2.8,10 Q1,10 0,9"/><path transform="translate(1.75,-5.00)" d="M0,0 L3.2,10 L6.4,0"/><path transform="translate(12.05,-5.00)" d="M0.3,0 L5.5,0 L2.5,4.1 Q5.8,4 5.8,7 Q5.8,10 2.8,10 Q1,10 0,9"/></g>
<g transform="translate(181.30,534.60) rotate(-90) scale(1.1000)" fill="none" stroke="#000" stroke-width="2.318" stroke-linecap="round" stroke-linejoin="round" stroke-opacity="0.55"><path transform="translate(-13.00,-5.00)" d="M3,3.2 L3,10 M0,6.6 L6,6.6"/><path transform="translate(-3.10,-5.00)" d="M5.4,0 L0.8,0 L0.4,4.5 Q1.5,3.9 2.9,3.9 Q5.8,3.9 5.8,6.9 Q5.8,10 2.8,10 Q1,10 0,9"/><path transform="translate(6.60,-5.00)" d="M0,0 L3.2,10 L6.4,0"/></g><g transform="translate(181.30,534.60) rotate(-90) scale(1.1000)" fill="none" stroke="#ececec" stroke-width="1.136" stroke-linecap="round" stroke-linejoin="round" ><path transform="translate(-13.00,-5.00)" d="M3,3.2 L3,10 M0,6.6 L6,6.6"/><path transform="translate(-3.10,-5.00)" d="M5.4,0 L0.8,0 L0.4,4.5 Q1.5,3.9 2.9,3.9 Q5.8,3.9 5.8,6.9 Q5.8,10 2.8,10 Q1,10 0,9"/><path transform="translate(6.60,-5.00)" d="M0,0 L3.2,10 L6.4,0"/></g>
<g transform="translate(401.10,348.30) rotate(-90) scale(0.9500)" fill="none" stroke="#000" stroke-width="2.684" stroke-linecap="round" stroke-linejoin="round" stroke-opacity="0.55"><path transform="translate(-2.90,-5.00)" d="M0.2,1.6 Q1,0 2.9,0 Q5.6,0 5.6,2.7 Q5.6,4.3 4,5.8 L0,10 L5.8,10"/></g><g transform="translate(401.10,348.30) rotate(-90) scale(0.9500)" fill="none" stroke="#ececec" stroke-width="1.316" stroke-linecap="round" stroke-linejoin="round" ><path transform="translate(-2.90,-5.00)" d="M0.2,1.6 Q1,0 2.9,0 Q5.6,0 5.6,2.7 Q5.6,4.3 4,5.8 L0,10 L5.8,10"/></g>
<g transform="translate(401.10,431.50) rotate(-90) scale(0.9500)" fill="none" stroke="#000" stroke-width="2.684" stroke-linecap="round" stroke-linejoin="round" stroke-opacity="0.55"><path transform="translate(-2.85,-5.00)" d="M0,2.9 L2.9,0 L2.9,10 M0,10 L5.7,10"/></g><g transform="translate(401.10,431.50) rotate(-90) scale(0.9500)" fill="none" stroke="#ececec" stroke-width="1.316" stroke-linecap="round" stroke-linejoin="round" ><path transform="translate(-2.85,-5.00)" d="M0,2.9 L2.9,0 L2.9,10 M0,10 L5.7,10"/></g>
<g transform="translate(421.50,349.00) rotate(-90) scale(1.1000)" fill="none" stroke="#000" stroke-width="2.318" stroke-linecap="round" stroke-linejoin="round" stroke-opacity="0.55"><path transform="translate(-12.80,-5.00)" d="M6,1.2 Q5,0 3,0 Q0,0 0,3.5 L0,6.5 Q0,10 3,10 Q6,10 6,7.5 L6,5.5 L3.5,5.5"/><path transform="translate(-2.90,-5.00)" d="M0,10 L0,0 L6,10 L6,0"/><path transform="translate(7.00,-5.00)" d="M0,10 L0,0 L2.2,0 Q5.8,0 5.8,4 L5.8,6 Q5.8,10 2.2,10 L0,10"/></g><g transform="translate(421.50,349.00) rotate(-90) scale(1.1000)" fill="none" stroke="#ececec" stroke-width="1.136" stroke-linecap="round" stroke-linejoin="round" ><path transform="translate(-12.80,-5.00)" d="M6,1.2 Q5,0 3,0 Q0,0 0,3.5 L0,6.5 Q0,10 3,10 Q6,10 6,7.5 L6,5.5 L3.5,5.5"/><path transform="translate(-2.90,-5.00)" d="M0,10 L0,0 L6,10 L6,0"/><path transform="translate(7.00,-5.00)" d="M0,10 L0,0 L2.2,0 Q5.8,0 5.8,4 L5.8,6 Q5.8,10 2.2,10 L0,10"/></g>
<g transform="translate(421.50,431.60) rotate(-90) scale(0.8500)" fill="none" stroke="#000" stroke-width="3.000" stroke-linecap="round" stroke-linejoin="round" stroke-opacity="0.55"><path transform="translate(-17.85,-5.00)" d="M3,3.2 L3,10 M0,6.6 L6,6.6"/><path transform="translate(-7.95,-5.00)" d="M0.3,0 L5.5,0 L2.5,4.1 Q5.8,4 5.8,7 Q5.8,10 2.8,10 Q1,10 0,9"/><path transform="translate(1.75,-5.00)" d="M0,0 L3.2,10 L6.4,0"/><path transform="translate(12.05,-5.00)" d="M0.3,0 L5.5,0 L2.5,4.1 Q5.8,4 5.8,7 Q5.8,10 2.8,10 Q1,10 0,9"/></g><g transform="translate(421.50,431.60) rotate(-90) scale(0.8500)" fill="none" stroke="#ececec" stroke-width="1.471" stroke-linecap="round" stroke-linejoin="round" ><path transform="translate(-17.85,-5.00)" d="M3,3.2 L3,10 M0,6.6 L6,6.6"/><path transform="translate(-7.95,-5.00)" d="M0.3,0 L5.5,0 L2.5,4.1 Q5.8,4 5.8,7 Q5.8,10 2.8,10 Q1,10 0,9"/><path transform="translate(1.75,-5.00)" d="M0,0 L3.2,10 L6.4,0"/><path transform="translate(12.05,-5.00)" d="M0.3,0 L5.5,0 L2.5,4.1 Q5.8,4 5.8,7 Q5.8,10 2.8,10 Q1,10 0,9"/></g>
<g transform="translate(486.40,348.30) rotate(-90) scale(0.9500)" fill="none" stroke="#000" stroke-width="2.684" stroke-linecap="round" stroke-linejoin="round" stroke-opacity="0.55"><path transform="translate(-2.90,-5.00)" d="M0.2,1.6 Q1,0 2.9,0 Q5.6,0 5.6,2.7 Q5.6,4.3 4,5.8 L0,10 L5.8,10"/></g><g transform="translate(486.40,348.30) rotate(-90) scale(0.9500)" fill="none" stroke="#ececec" stroke-width="1.316" stroke-linecap="round" stroke-linejoin="round" ><path transform="translate(-2.90,-5.00)" d="M0.2,1.6 Q1,0 2.9,0 Q5.6,0 5.6,2.7 Q5.6,4.3 4,5.8 L0,10 L5.8,10"/></g>
<g transform="translate(486.40,431.50) rotate(-90) scale(0.9500)" fill="none" stroke="#000" stroke-width="2.684" stroke-linecap="round" stroke-linejoin="round" stroke-opacity="0.55"><path transform="translate(-2.85,-5.00)" d="M0,2.9 L2.9,0 L2.9,10 M0,10 L5.7,10"/></g><g transform="translate(486.40,431.50) rotate(-90) scale(0.9500)" fill="none" stroke="#ececec" stroke-width="1.316" stroke-linecap="round" stroke-linejoin="round" ><path transform="translate(-2.85,-5.00)" d="M0,2.9 L2.9,0 L2.9,10 M0,10 L5.7,10"/></g>
<g transform="translate(506.80,349.00) rotate(-90) scale(1.1000)" fill="none" stroke="#000" stroke-width="2.318" stroke-linecap="round" stroke-linejoin="round" stroke-opacity="0.55"><path transform="translate(-12.80,-5.00)" d="M6,1.2 Q5,0 3,0 Q0,0 0,3.5 L0,6.5 Q0,10 3,10 Q6,10 6,7.5 L6,5.5 L3.5,5.5"/><path transform="translate(-2.90,-5.00)" d="M0,10 L0,0 L6,10 L6,0"/><path transform="translate(7.00,-5.00)" d="M0,10 L0,0 L2.2,0 Q5.8,0 5.8,4 L5.8,6 Q5.8,10 2.2,10 L0,10"/></g><g transform="translate(506.80,349.00) rotate(-90) scale(1.1000)" fill="none" stroke="#ececec" stroke-width="1.136" stroke-linecap="round" stroke-linejoin="round" ><path transform="translate(-12.80,-5.00)" d="M6,1.2 Q5,0 3,0 Q0,0 0,3.5 L0,6.5 Q0,10 3,10 Q6,10 6,7.5 L6,5.5 L3.5,5.5"/><path transform="translate(-2.90,-5.00)" d="M0,10 L0,0 L6,10 L6,0"/><path transform="translate(7.00,-5.00)" d="M0,10 L0,0 L2.2,0 Q5.8,0 5.8,4 L5.8,6 Q5.8,10 2.2,10 L0,10"/></g>
<g transform="translate(506.80,431.60) rotate(-90) scale(0.8500)" fill="none" stroke="#000" stroke-width="3.000" stroke-linecap="round" stroke-linejoin="round" stroke-opacity="0.55"><path transform="translate(-17.85,-5.00)" d="M3,3.2 L3,10 M0,6.6 L6,6.6"/><path transform="translate(-7.95,-5.00)" d="M0.3,0 L5.5,0 L2.5,4.1 Q5.8,4 5.8,7 Q5.8,10 2.8,10 Q1,10 0,9"/><path transform="translate(1.75,-5.00)" d="M0,0 L3.2,10 L6.4,0"/><path transform="translate(12.05,-5.00)" d="M0.3,0 L5.5,0 L2.5,4.1 Q5.8,4 5.8,7 Q5.8,10 2.8,10 Q1,10 0,9"/></g><g transform="translate(506.80,431.60) rotate(-90) scale(0.8500)" fill="none" stroke="#ececec" stroke-width="1.471" stroke-linecap="round" stroke-linejoin="round" ><path transform="translate(-17.85,-5.00)" d="M3,3.2 L3,10 M0,6.6 L6,6.6"/><path transform="translate(-7.95,-5.00)" d="M0.3,0 L5.5,0 L2.5,4.1 Q5.8,4 5.8,7 Q5.8,10 2.8,10 Q1,10 0,9"/><path transform="translate(1.75,-5.00)" d="M0,0 L3.2,10 L6.4,0"/><path transform="translate(12.05,-5.00)" d="M0.3,0 L5.5,0 L2.5,4.1 Q5.8,4 5.8,7 Q5.8,10 2.8,10 Q1,10 0,9"/></g>
<g transform="translate(397.00,215.20) rotate(0) scale(0.8500)" fill="none" stroke="#000" stroke-width="2.706" stroke-linecap="round" stroke-linejoin="round" stroke-opacity="0.55"><path transform="translate(-17.85,-5.00)" d="M3,3.2 L3,10 M0,6.6 L6,6.6"/><path transform="translate(-7.95,-5.00)" d="M0.3,0 L5.5,0 L2.5,4.1 Q5.8,4 5.8,7 Q5.8,10 2.8,10 Q1,10 0,9"/><path transform="translate(1.75,-5.00)" d="M0,0 L3.2,10 L6.4,0"/><path transform="translate(12.05,-5.00)" d="M0.3,0 L5.5,0 L2.5,4.1 Q5.8,4 5.8,7 Q5.8,10 2.8,10 Q1,10 0,9"/></g><g transform="translate(397.00,215.20) rotate(0) scale(0.8500)" fill="none" stroke="#ececec" stroke-width="1.176" stroke-linecap="round" stroke-linejoin="round" ><path transform="translate(-17.85,-5.00)" d="M3,3.2 L3,10 M0,6.6 L6,6.6"/><path transform="translate(-7.95,-5.00)" d="M0.3,0 L5.5,0 L2.5,4.1 Q5.8,4 5.8,7 Q5.8,10 2.8,10 Q1,10 0,9"/><path transform="translate(1.75,-5.00)" d="M0,0 L3.2,10 L6.4,0"/><path transform="translate(12.05,-5.00)" d="M0.3,0 L5.5,0 L2.5,4.1 Q5.8,4 5.8,7 Q5.8,10 2.8,10 Q1,10 0,9"/></g>
<g transform="translate(395.80,235.80) rotate(0) scale(1.3000)" fill="none" stroke="#000" stroke-width="1.962" stroke-linecap="round" stroke-linejoin="round" stroke-opacity="0.55"><path transform="translate(-2.90,-5.00)" d="M0.2,1.6 Q1,0 2.9,0 Q5.6,0 5.6,2.7 Q5.6,4.3 4,5.8 L0,10 L5.8,10"/></g><g transform="translate(395.80,235.80) rotate(0) scale(1.3000)" fill="none" stroke="#ececec" stroke-width="0.962" stroke-linecap="round" stroke-linejoin="round" ><path transform="translate(-2.90,-5.00)" d="M0.2,1.6 Q1,0 2.9,0 Q5.6,0 5.6,2.7 Q5.6,4.3 4,5.8 L0,10 L5.8,10"/></g>
<g transform="translate(484.50,235.80) rotate(0) scale(1.3000)" fill="none" stroke="#000" stroke-width="1.962" stroke-linecap="round" stroke-linejoin="round" stroke-opacity="0.55"><path transform="translate(-2.85,-5.00)" d="M0,2.9 L2.9,0 L2.9,10 M0,10 L5.7,10"/></g><g transform="translate(484.50,235.80) rotate(0) scale(1.3000)" fill="none" stroke="#ececec" stroke-width="0.962" stroke-linecap="round" stroke-linejoin="round" ><path transform="translate(-2.85,-5.00)" d="M0,2.9 L2.9,0 L2.9,10 M0,10 L5.7,10"/></g>
<text x="484.3" y="217" font-size="4.6" fill="#e0e0e0" text-anchor="middle" style="font-family:'Liberation Sans',sans-serif" textLength="33" lengthAdjust="spacingAndGlyphs">Net-(D1-Pad1)</text>
<text x="566.9" y="218" font-size="4" fill="#e0e0e0" text-anchor="middle" style="font-family:'Liberation Sans',sans-serif" textLength="26" lengthAdjust="spacingAndGlyphs">Net-(D1-Pad1)</text>
<text x="634" y="218" font-size="4" fill="#e0e0e0" text-anchor="middle" style="font-family:'Liberation Sans',sans-serif" textLength="28" lengthAdjust="spacingAndGlyphs">Net-(D1-Pad2)</text>
<g transform="translate(566.30,235.20) rotate(0) scale(0.9500)" fill="none" stroke="#000" stroke-width="2.526" stroke-linecap="round" stroke-linejoin="round" stroke-opacity="0.55"><path transform="translate(-2.85,-5.00)" d="M0,2.9 L2.9,0 L2.9,10 M0,10 L5.7,10"/></g><g transform="translate(566.30,235.20) rotate(0) scale(0.9500)" fill="none" stroke="#ececec" stroke-width="1.158" stroke-linecap="round" stroke-linejoin="round" ><path transform="translate(-2.85,-5.00)" d="M0,2.9 L2.9,0 L2.9,10 M0,10 L5.7,10"/></g>
<g transform="translate(635.30,235.20) rotate(0) scale(0.9500)" fill="none" stroke="#000" stroke-width="2.526" stroke-linecap="round" stroke-linejoin="round" stroke-opacity="0.55"><path transform="translate(-2.90,-5.00)" d="M0.2,1.6 Q1,0 2.9,0 Q5.6,0 5.6,2.7 Q5.6,4.3 4,5.8 L0,10 L5.8,10"/></g><g transform="translate(635.30,235.20) rotate(0) scale(0.9500)" fill="none" stroke="#ececec" stroke-width="1.158" stroke-linecap="round" stroke-linejoin="round" ><path transform="translate(-2.90,-5.00)" d="M0.2,1.6 Q1,0 2.9,0 Q5.6,0 5.6,2.7 Q5.6,4.3 4,5.8 L0,10 L5.8,10"/></g>
<g transform="translate(573.10,350.30) rotate(0) scale(0.7000)" fill="none" stroke="#000" stroke-width="3.286" stroke-linecap="round" stroke-linejoin="round" stroke-opacity="0.55"><path transform="translate(-2.85,-5.00)" d="M0,2.9 L2.9,0 L2.9,10 M0,10 L5.7,10"/></g><g transform="translate(573.10,350.30) rotate(0) scale(0.7000)" fill="none" stroke="#ececec" stroke-width="1.429" stroke-linecap="round" stroke-linejoin="round" ><path transform="translate(-2.85,-5.00)" d="M0,2.9 L2.9,0 L2.9,10 M0,10 L5.7,10"/></g>
<g transform="translate(573.10,376.60) rotate(0) scale(0.7000)" fill="none" stroke="#000" stroke-width="3.286" stroke-linecap="round" stroke-linejoin="round" stroke-opacity="0.55"><path transform="translate(-2.90,-5.00)" d="M0.2,1.6 Q1,0 2.9,0 Q5.6,0 5.6,2.7 Q5.6,4.3 4,5.8 L0,10 L5.8,10"/></g><g transform="translate(573.10,376.60) rotate(0) scale(0.7000)" fill="none" stroke="#ececec" stroke-width="1.429" stroke-linecap="round" stroke-linejoin="round" ><path transform="translate(-2.90,-5.00)" d="M0.2,1.6 Q1,0 2.9,0 Q5.6,0 5.6,2.7 Q5.6,4.3 4,5.8 L0,10 L5.8,10"/></g>
<g transform="translate(623.00,350.30) rotate(0) scale(0.7000)" fill="none" stroke="#000" stroke-width="3.286" stroke-linecap="round" stroke-linejoin="round" stroke-opacity="0.55"><path transform="translate(-2.90,-5.00)" d="M2.9,4.6 Q0.4,4.6 0.4,2.3 Q0.4,0 2.9,0 Q5.4,0 5.4,2.3 Q5.4,4.6 2.9,4.6 Q0,4.6 0,7.3 Q0,10 2.9,10 Q5.8,10 5.8,7.3 Q5.8,4.6 2.9,4.6 Z"/></g><g transform="translate(623.00,350.30) rotate(0) scale(0.7000)" fill="none" stroke="#ececec" stroke-width="1.429" stroke-linecap="round" stroke-linejoin="round" ><path transform="translate(-2.90,-5.00)" d="M2.9,4.6 Q0.4,4.6 0.4,2.3 Q0.4,0 2.9,0 Q5.4,0 5.4,2.3 Q5.4,4.6 2.9,4.6 Q0,4.6 0,7.3 Q0,10 2.9,10 Q5.8,10 5.8,7.3 Q5.8,4.6 2.9,4.6 Z"/></g>
<g transform="translate(623.00,376.60) rotate(0) scale(0.7000)" fill="none" stroke="#000" stroke-width="3.286" stroke-linecap="round" stroke-linejoin="round" stroke-opacity="0.55"><path transform="translate(-3.40,-5.00)" d="M0,0 L6.8,0 L2.3,10"/></g><g transform="translate(623.00,376.60) rotate(0) scale(0.7000)" fill="none" stroke="#ececec" stroke-width="1.429" stroke-linecap="round" stroke-linejoin="round" ><path transform="translate(-3.40,-5.00)" d="M0,0 L6.8,0 L2.3,10"/></g>
<g transform="translate(573.10,405.60) rotate(0) scale(0.6000)" fill="none" stroke="#000" stroke-width="3.667" stroke-linecap="round" stroke-linejoin="round" stroke-opacity="0.55"><path transform="translate(-2.90,-5.00)" d="M0.3,0 L5.5,0 L2.5,4.1 Q5.8,4 5.8,7 Q5.8,10 2.8,10 Q1,10 0,9"/></g><g transform="translate(573.10,405.60) rotate(0) scale(0.6000)" fill="none" stroke="#ececec" stroke-width="1.500" stroke-linecap="round" stroke-linejoin="round" ><path transform="translate(-2.90,-5.00)" d="M0.3,0 L5.5,0 L2.5,4.1 Q5.8,4 5.8,7 Q5.8,10 2.8,10 Q1,10 0,9"/></g>
<g transform="translate(573.10,399.60) rotate(0) scale(0.4762)" fill="none" stroke="#000" stroke-width="4.200" stroke-linecap="round" stroke-linejoin="round" stroke-opacity="0.55"><path transform="translate(-17.85,-5.00)" d="M3,3.2 L3,10 M0,6.6 L6,6.6"/><path transform="translate(-7.95,-5.00)" d="M0.3,0 L5.5,0 L2.5,4.1 Q5.8,4 5.8,7 Q5.8,10 2.8,10 Q1,10 0,9"/><path transform="translate(1.75,-5.00)" d="M0,0 L3.2,10 L6.4,0"/><path transform="translate(12.05,-5.00)" d="M0.3,0 L5.5,0 L2.5,4.1 Q5.8,4 5.8,7 Q5.8,10 2.8,10 Q1,10 0,9"/></g><g transform="translate(573.10,399.60) rotate(0) scale(0.4762)" fill="none" stroke="#ececec" stroke-width="1.470" stroke-linecap="round" stroke-linejoin="round" ><path transform="translate(-17.85,-5.00)" d="M3,3.2 L3,10 M0,6.6 L6,6.6"/><path transform="translate(-7.95,-5.00)" d="M0.3,0 L5.5,0 L2.5,4.1 Q5.8,4 5.8,7 Q5.8,10 2.8,10 Q1,10 0,9"/><path transform="translate(1.75,-5.00)" d="M0,0 L3.2,10 L6.4,0"/><path transform="translate(12.05,-5.00)" d="M0.3,0 L5.5,0 L2.5,4.1 Q5.8,4 5.8,7 Q5.8,10 2.8,10 Q1,10 0,9"/></g>
<g transform="translate(573.10,432.00) rotate(0) scale(0.6000)" fill="none" stroke="#000" stroke-width="3.667" stroke-linecap="round" stroke-linejoin="round" stroke-opacity="0.55"><path transform="translate(-3.00,-5.00)" d="M2.2,0 L0,7 L6,7 M4.7,3.2 L4.7,10"/></g><g transform="translate(573.10,432.00) rotate(0) scale(0.6000)" fill="none" stroke="#ececec" stroke-width="1.500" stroke-linecap="round" stroke-linejoin="round" ><path transform="translate(-3.00,-5.00)" d="M2.2,0 L0,7 L6,7 M4.7,3.2 L4.7,10"/></g>
<g transform="translate(573.10,426.00) rotate(0) scale(0.4762)" fill="none" stroke="#000" stroke-width="4.200" stroke-linecap="round" stroke-linejoin="round" stroke-opacity="0.55"><path transform="translate(-17.85,-5.00)" d="M3,3.2 L3,10 M0,6.6 L6,6.6"/><path transform="translate(-7.95,-5.00)" d="M0.3,0 L5.5,0 L2.5,4.1 Q5.8,4 5.8,7 Q5.8,10 2.8,10 Q1,10 0,9"/><path transform="translate(1.75,-5.00)" d="M0,0 L3.2,10 L6.4,0"/><path transform="translate(12.05,-5.00)" d="M0.3,0 L5.5,0 L2.5,4.1 Q5.8,4 5.8,7 Q5.8,10 2.8,10 Q1,10 0,9"/></g><g transform="translate(573.10,426.00) rotate(0) scale(0.4762)" fill="none" stroke="#ececec" stroke-width="1.470" stroke-linecap="round" stroke-linejoin="round" ><path transform="translate(-17.85,-5.00)" d="M3,3.2 L3,10 M0,6.6 L6,6.6"/><path transform="translate(-7.95,-5.00)" d="M0.3,0 L5.5,0 L2.5,4.1 Q5.8,4 5.8,7 Q5.8,10 2.8,10 Q1,10 0,9"/><path transform="translate(1.75,-5.00)" d="M0,0 L3.2,10 L6.4,0"/><path transform="translate(12.05,-5.00)" d="M0.3,0 L5.5,0 L2.5,4.1 Q5.8,4 5.8,7 Q5.8,10 2.8,10 Q1,10 0,9"/></g>
<g transform="translate(623.00,405.60) rotate(0) scale(0.6000)" fill="none" stroke="#000" stroke-width="3.667" stroke-linecap="round" stroke-linejoin="round" stroke-opacity="0.55"><path transform="translate(-2.70,-5.00)" d="M4.9,0.3 Q4,0 2.9,0 Q0,0 0,5 L0,6.8 Q0,10 2.7,10 Q5.4,10 5.4,7.1 Q5.4,4.3 2.7,4.3 Q0.6,4.3 0,5.8"/></g><g transform="translate(623.00,405.60) rotate(0) scale(0.6000)" fill="none" stroke="#ececec" stroke-width="1.500" stroke-linecap="round" stroke-linejoin="round" ><path transform="translate(-2.70,-5.00)" d="M4.9,0.3 Q4,0 2.9,0 Q0,0 0,5 L0,6.8 Q0,10 2.7,10 Q5.4,10 5.4,7.1 Q5.4,4.3 2.7,4.3 Q0.6,4.3 0,5.8"/></g>
<g transform="translate(623.00,399.60) rotate(0) scale(0.2471)" fill="none" stroke="#000" stroke-width="8.094" stroke-linecap="round" stroke-linejoin="round" stroke-opacity="0.55"><path transform="translate(-34.40,-5.00)" d="M0.5,0 L0.5,10"/><path transform="translate(-29.50,-5.00)" d="M0.2,1.6 Q1,0 2.9,0 Q5.6,0 5.6,2.7 Q5.6,4.3 4,5.8 L0,10 L5.8,10"/><path transform="translate(-19.80,-5.00)" d="M6,1.2 Q5,0 3,0 Q0,0 0,3.5 L0,6.5 Q0,10 3,10 Q5,10 6,8.8"/><path transform="translate(-9.90,-5.00)" d="M0,2.9 L2.9,0 L2.9,10 M0,10 L5.7,10"/><path transform="translate(-0.30,-5.00)" d="M0,10.8 L6,10.8"/><path transform="translate(9.60,-5.00)" d="M5.6,1.2 Q4.8,0 2.9,0 Q0.2,0 0.2,2.6 Q0.2,4.4 2.9,4.9 Q5.8,5.5 5.8,7.5 Q5.8,10 2.9,10 Q0.9,10 0,8.8"/><path transform="translate(19.30,-5.00)" d="M6,1.2 Q5,0 3,0 Q0,0 0,3.5 L0,6.5 Q0,10 3,10 Q5,10 6,8.8"/><path transform="translate(29.20,-5.00)" d="M0,0 L0,10 L5.2,10"/></g><g transform="translate(623.00,399.60) rotate(0) scale(0.2471)" fill="none" stroke="#ececec" stroke-width="2.833" stroke-linecap="round" stroke-linejoin="round" ><path transform="translate(-34.40,-5.00)" d="M0.5,0 L0.5,10"/><path transform="translate(-29.50,-5.00)" d="M0.2,1.6 Q1,0 2.9,0 Q5.6,0 5.6,2.7 Q5.6,4.3 4,5.8 L0,10 L5.8,10"/><path transform="translate(-19.80,-5.00)" d="M6,1.2 Q5,0 3,0 Q0,0 0,3.5 L0,6.5 Q0,10 3,10 Q5,10 6,8.8"/><path transform="translate(-9.90,-5.00)" d="M0,2.9 L2.9,0 L2.9,10 M0,10 L5.7,10"/><path transform="translate(-0.30,-5.00)" d="M0,10.8 L6,10.8"/><path transform="translate(9.60,-5.00)" d="M5.6,1.2 Q4.8,0 2.9,0 Q0.2,0 0.2,2.6 Q0.2,4.4 2.9,4.9 Q5.8,5.5 5.8,7.5 Q5.8,10 2.9,10 Q0.9,10 0,8.8"/><path transform="translate(19.30,-5.00)" d="M6,1.2 Q5,0 3,0 Q0,0 0,3.5 L0,6.5 Q0,10 3,10 Q5,10 6,8.8"/><path transform="translate(29.20,-5.00)" d="M0,0 L0,10 L5.2,10"/></g>
<g transform="translate(623.00,432.00) rotate(0) scale(0.6000)" fill="none" stroke="#000" stroke-width="3.667" stroke-linecap="round" stroke-linejoin="round" stroke-opacity="0.55"><path transform="translate(-2.90,-5.00)" d="M5.4,0 L0.8,0 L0.4,4.5 Q1.5,3.9 2.9,3.9 Q5.8,3.9 5.8,6.9 Q5.8,10 2.8,10 Q1,10 0,9"/></g><g transform="translate(623.00,432.00) rotate(0) scale(0.6000)" fill="none" stroke="#ececec" stroke-width="1.500" stroke-linecap="round" stroke-linejoin="round" ><path transform="translate(-2.90,-5.00)" d="M5.4,0 L0.8,0 L0.4,4.5 Q1.5,3.9 2.9,3.9 Q5.8,3.9 5.8,6.9 Q5.8,10 2.8,10 Q1,10 0,9"/></g>
<g transform="translate(623.00,426.00) rotate(0) scale(0.2436)" fill="none" stroke="#000" stroke-width="8.212" stroke-linecap="round" stroke-linejoin="round" stroke-opacity="0.55"><path transform="translate(-34.90,-5.00)" d="M0.5,0 L0.5,10"/><path transform="translate(-30.00,-5.00)" d="M0.2,1.6 Q1,0 2.9,0 Q5.6,0 5.6,2.7 Q5.6,4.3 4,5.8 L0,10 L5.8,10"/><path transform="translate(-20.30,-5.00)" d="M6,1.2 Q5,0 3,0 Q0,0 0,3.5 L0,6.5 Q0,10 3,10 Q5,10 6,8.8"/><path transform="translate(-10.40,-5.00)" d="M0,2.9 L2.9,0 L2.9,10 M0,10 L5.7,10"/><path transform="translate(-0.80,-5.00)" d="M0,10.8 L6,10.8"/><path transform="translate(9.10,-5.00)" d="M5.6,1.2 Q4.8,0 2.9,0 Q0.2,0 0.2,2.6 Q0.2,4.4 2.9,4.9 Q5.8,5.5 5.8,7.5 Q5.8,10 2.9,10 Q0.9,10 0,8.8"/><path transform="translate(18.80,-5.00)" d="M0,10 L0,0 L2.2,0 Q5.8,0 5.8,4 L5.8,6 Q5.8,10 2.2,10 L0,10"/><path transform="translate(28.50,-5.00)" d="M0,10 L3.2,0 L6.4,10 M1.1,6.6 L5.3,6.6"/></g><g transform="translate(623.00,426.00) rotate(0) scale(0.2436)" fill="none" stroke="#ececec" stroke-width="2.874" stroke-linecap="round" stroke-linejoin="round" ><path transform="translate(-34.90,-5.00)" d="M0.5,0 L0.5,10"/><path transform="translate(-30.00,-5.00)" d="M0.2,1.6 Q1,0 2.9,0 Q5.6,0 5.6,2.7 Q5.6,4.3 4,5.8 L0,10 L5.8,10"/><path transform="translate(-20.30,-5.00)" d="M6,1.2 Q5,0 3,0 Q0,0 0,3.5 L0,6.5 Q0,10 3,10 Q5,10 6,8.8"/><path transform="translate(-10.40,-5.00)" d="M0,2.9 L2.9,0 L2.9,10 M0,10 L5.7,10"/><path transform="translate(-0.80,-5.00)" d="M0,10.8 L6,10.8"/><path transform="translate(9.10,-5.00)" d="M5.6,1.2 Q4.8,0 2.9,0 Q0.2,0 0.2,2.6 Q0.2,4.4 2.9,4.9 Q5.8,5.5 5.8,7.5 Q5.8,10 2.9,10 Q0.9,10 0,8.8"/><path transform="translate(18.80,-5.00)" d="M0,10 L0,0 L2.2,0 Q5.8,0 5.8,4 L5.8,6 Q5.8,10 2.2,10 L0,10"/><path transform="translate(28.50,-5.00)" d="M0,10 L3.2,0 L6.4,10 M1.1,6.6 L5.3,6.6"/></g>
<g transform="translate(377.05,565.00) rotate(-90) scale(0.5200)" fill="none" stroke="#000" stroke-width="4.135" stroke-linecap="round" stroke-linejoin="round" stroke-opacity="0.55"><path transform="translate(-7.75,-5.00)" d="M0.2,1.6 Q1,0 2.9,0 Q5.6,0 5.6,2.7 Q5.6,4.3 4,5.8 L0,10 L5.8,10"/><path transform="translate(1.95,-5.00)" d="M2.9,0 Q0,0 0,4 L0,6 Q0,10 2.9,10 Q5.8,10 5.8,6 L5.8,4 Q5.8,0 2.9,0 Z"/></g><g transform="translate(377.05,565.00) rotate(-90) scale(0.5200)" fill="none" stroke="#ececec" stroke-width="1.635" stroke-linecap="round" stroke-linejoin="round" ><path transform="translate(-7.75,-5.00)" d="M0.2,1.6 Q1,0 2.9,0 Q5.6,0 5.6,2.7 Q5.6,4.3 4,5.8 L0,10 L5.8,10"/><path transform="translate(1.95,-5.00)" d="M2.9,0 Q0,0 0,4 L0,6 Q0,10 2.9,10 Q5.8,10 5.8,6 L5.8,4 Q5.8,0 2.9,0 Z"/></g>
<g transform="translate(384.25,565.00) rotate(-90) scale(0.4600)" fill="none" stroke="#000" stroke-width="4.457" stroke-linecap="round" stroke-linejoin="round" stroke-opacity="0.55"><path transform="translate(-23.55,-5.00)" d="M5.6,1.2 Q4.8,0 2.9,0 Q0.2,0 0.2,2.6 Q0.2,4.4 2.9,4.9 Q5.8,5.5 5.8,7.5 Q5.8,10 2.9,10 Q0.9,10 0,8.8"/><path transform="translate(-13.85,-5.00)" d="M0,0 L2.1,10 L4.25,3 L6.4,10 L8.5,0"/><path transform="translate(-1.45,-5.00)" d="M6,1.2 Q5,0 3,0 Q0,0 0,3.5 L0,6.5 Q0,10 3,10 Q5,10 6,8.8"/><path transform="translate(8.45,-5.00)" d="M0,0 L0,10 L5.2,10"/><path transform="translate(17.55,-5.00)" d="M0,10 L0,0 M6,0 L0,6.6 M2.3,4.2 L6,10"/></g><g transform="translate(384.25,565.00) rotate(-90) scale(0.4600)" fill="none" stroke="#ececec" stroke-width="1.630" stroke-linecap="round" stroke-linejoin="round" ><path transform="translate(-23.55,-5.00)" d="M5.6,1.2 Q4.8,0 2.9,0 Q0.2,0 0.2,2.6 Q0.2,4.4 2.9,4.9 Q5.8,5.5 5.8,7.5 Q5.8,10 2.9,10 Q0.9,10 0,8.8"/><path transform="translate(-13.85,-5.00)" d="M0,0 L2.1,10 L4.25,3 L6.4,10 L8.5,0"/><path transform="translate(-1.45,-5.00)" d="M6,1.2 Q5,0 3,0 Q0,0 0,3.5 L0,6.5 Q0,10 3,10 Q5,10 6,8.8"/><path transform="translate(8.45,-5.00)" d="M0,0 L0,10 L5.2,10"/><path transform="translate(17.55,-5.00)" d="M0,10 L0,0 M6,0 L0,6.6 M2.3,4.2 L6,10"/></g>
<g transform="translate(398.40,565.00) rotate(-90) scale(0.5200)" fill="none" stroke="#000" stroke-width="4.135" stroke-linecap="round" stroke-linejoin="round" stroke-opacity="0.55"><path transform="translate(-7.60,-5.00)" d="M0,2.9 L2.9,0 L2.9,10 M0,10 L5.7,10"/><path transform="translate(2.00,-5.00)" d="M5.6,4.2 Q4.8,5.8 2.8,5.8 Q0,5.8 0,2.9 Q0,0 2.8,0 Q5.6,0 5.6,4 L5.6,5.5 Q5.6,10 2.5,10 Q1.3,10 0.6,9.6"/></g><g transform="translate(398.40,565.00) rotate(-90) scale(0.5200)" fill="none" stroke="#ececec" stroke-width="1.635" stroke-linecap="round" stroke-linejoin="round" ><path transform="translate(-7.60,-5.00)" d="M0,2.9 L2.9,0 L2.9,10 M0,10 L5.7,10"/><path transform="translate(2.00,-5.00)" d="M5.6,4.2 Q4.8,5.8 2.8,5.8 Q0,5.8 0,2.9 Q0,0 2.8,0 Q5.6,0 5.6,4 L5.6,5.5 Q5.6,10 2.5,10 Q1.3,10 0.6,9.6"/></g>
<g transform="translate(405.60,565.00) rotate(-90) scale(0.4600)" fill="none" stroke="#000" stroke-width="4.457" stroke-linecap="round" stroke-linejoin="round" stroke-opacity="0.55"><path transform="translate(-21.35,-5.00)" d="M5.6,1.2 Q4.8,0 2.9,0 Q0.2,0 0.2,2.6 Q0.2,4.4 2.9,4.9 Q5.8,5.5 5.8,7.5 Q5.8,10 2.9,10 Q0.9,10 0,8.8"/><path transform="translate(-11.65,-5.00)" d="M0,0 L2.1,10 L4.25,3 L6.4,10 L8.5,0"/><path transform="translate(0.75,-5.00)" d="M0,10 L0,0 L2.2,0 Q5.8,0 5.8,4 L5.8,6 Q5.8,10 2.2,10 L0,10"/><path transform="translate(10.45,-5.00)" d="M0.5,0 L0.5,10"/><path transform="translate(15.35,-5.00)" d="M3,0 Q0,0 0,4 L0,6 Q0,10 3,10 Q6,10 6,6 L6,4 Q6,0 3,0 Z"/></g><g transform="translate(405.60,565.00) rotate(-90) scale(0.4600)" fill="none" stroke="#ececec" stroke-width="1.630" stroke-linecap="round" stroke-linejoin="round" ><path transform="translate(-21.35,-5.00)" d="M5.6,1.2 Q4.8,0 2.9,0 Q0.2,0 0.2,2.6 Q0.2,4.4 2.9,4.9 Q5.8,5.5 5.8,7.5 Q5.8,10 2.9,10 Q0.9,10 0,8.8"/><path transform="translate(-11.65,-5.00)" d="M0,0 L2.1,10 L4.25,3 L6.4,10 L8.5,0"/><path transform="translate(0.75,-5.00)" d="M0,10 L0,0 L2.2,0 Q5.8,0 5.8,4 L5.8,6 Q5.8,10 2.2,10 L0,10"/><path transform="translate(10.45,-5.00)" d="M0.5,0 L0.5,10"/><path transform="translate(15.35,-5.00)" d="M3,0 Q0,0 0,4 L0,6 Q0,10 3,10 Q6,10 6,6 L6,4 Q6,0 3,0 Z"/></g>
<g transform="translate(419.75,565.00) rotate(-90) scale(0.5200)" fill="none" stroke="#000" stroke-width="4.135" stroke-linecap="round" stroke-linejoin="round" stroke-opacity="0.55"><path transform="translate(-7.70,-5.00)" d="M0,2.9 L2.9,0 L2.9,10 M0,10 L5.7,10"/><path transform="translate(1.90,-5.00)" d="M2.9,4.6 Q0.4,4.6 0.4,2.3 Q0.4,0 2.9,0 Q5.4,0 5.4,2.3 Q5.4,4.6 2.9,4.6 Q0,4.6 0,7.3 Q0,10 2.9,10 Q5.8,10 5.8,7.3 Q5.8,4.6 2.9,4.6 Z"/></g><g transform="translate(419.75,565.00) rotate(-90) scale(0.5200)" fill="none" stroke="#ececec" stroke-width="1.635" stroke-linecap="round" stroke-linejoin="round" ><path transform="translate(-7.70,-5.00)" d="M0,2.9 L2.9,0 L2.9,10 M0,10 L5.7,10"/><path transform="translate(1.90,-5.00)" d="M2.9,4.6 Q0.4,4.6 0.4,2.3 Q0.4,0 2.9,0 Q5.4,0 5.4,2.3 Q5.4,4.6 2.9,4.6 Q0,4.6 0,7.3 Q0,10 2.9,10 Q5.8,10 5.8,7.3 Q5.8,4.6 2.9,4.6 Z"/></g>
<g transform="translate(426.95,565.00) rotate(-90) scale(0.3868)" fill="none" stroke="#000" stroke-width="5.300" stroke-linecap="round" stroke-linejoin="round" stroke-opacity="0.55"><path transform="translate(-34.90,-5.00)" d="M0.5,0 L0.5,10"/><path transform="translate(-30.00,-5.00)" d="M0.2,1.6 Q1,0 2.9,0 Q5.6,0 5.6,2.7 Q5.6,4.3 4,5.8 L0,10 L5.8,10"/><path transform="translate(-20.30,-5.00)" d="M6,1.2 Q5,0 3,0 Q0,0 0,3.5 L0,6.5 Q0,10 3,10 Q5,10 6,8.8"/><path transform="translate(-10.40,-5.00)" d="M0,2.9 L2.9,0 L2.9,10 M0,10 L5.7,10"/><path transform="translate(-0.80,-5.00)" d="M0,10.8 L6,10.8"/><path transform="translate(9.10,-5.00)" d="M5.6,1.2 Q4.8,0 2.9,0 Q0.2,0 0.2,2.6 Q0.2,4.4 2.9,4.9 Q5.8,5.5 5.8,7.5 Q5.8,10 2.9,10 Q0.9,10 0,8.8"/><path transform="translate(18.80,-5.00)" d="M0,10 L0,0 L2.2,0 Q5.8,0 5.8,4 L5.8,6 Q5.8,10 2.2,10 L0,10"/><path transform="translate(28.50,-5.00)" d="M0,10 L3.2,0 L6.4,10 M1.1,6.6 L5.3,6.6"/></g><g transform="translate(426.95,565.00) rotate(-90) scale(0.3868)" fill="none" stroke="#ececec" stroke-width="1.939" stroke-linecap="round" stroke-linejoin="round" ><path transform="translate(-34.90,-5.00)" d="M0.5,0 L0.5,10"/><path transform="translate(-30.00,-5.00)" d="M0.2,1.6 Q1,0 2.9,0 Q5.6,0 5.6,2.7 Q5.6,4.3 4,5.8 L0,10 L5.8,10"/><path transform="translate(-20.30,-5.00)" d="M6,1.2 Q5,0 3,0 Q0,0 0,3.5 L0,6.5 Q0,10 3,10 Q5,10 6,8.8"/><path transform="translate(-10.40,-5.00)" d="M0,2.9 L2.9,0 L2.9,10 M0,10 L5.7,10"/><path transform="translate(-0.80,-5.00)" d="M0,10.8 L6,10.8"/><path transform="translate(9.10,-5.00)" d="M5.6,1.2 Q4.8,0 2.9,0 Q0.2,0 0.2,2.6 Q0.2,4.4 2.9,4.9 Q5.8,5.5 5.8,7.5 Q5.8,10 2.9,10 Q0.9,10 0,8.8"/><path transform="translate(18.80,-5.00)" d="M0,10 L0,0 L2.2,0 Q5.8,0 5.8,4 L5.8,6 Q5.8,10 2.2,10 L0,10"/><path transform="translate(28.50,-5.00)" d="M0,10 L3.2,0 L6.4,10 M1.1,6.6 L5.3,6.6"/></g>
<g transform="translate(441.10,565.00) rotate(-90) scale(0.5200)" fill="none" stroke="#000" stroke-width="4.135" stroke-linecap="round" stroke-linejoin="round" stroke-opacity="0.55"><path transform="translate(-8.20,-5.00)" d="M0,2.9 L2.9,0 L2.9,10 M0,10 L5.7,10"/><path transform="translate(1.40,-5.00)" d="M0,0 L6.8,0 L2.3,10"/></g><g transform="translate(441.10,565.00) rotate(-90) scale(0.5200)" fill="none" stroke="#ececec" stroke-width="1.635" stroke-linecap="round" stroke-linejoin="round" ><path transform="translate(-8.20,-5.00)" d="M0,2.9 L2.9,0 L2.9,10 M0,10 L5.7,10"/><path transform="translate(1.40,-5.00)" d="M0,0 L6.8,0 L2.3,10"/></g>
<g transform="translate(448.30,565.00) rotate(-90) scale(0.3924)" fill="none" stroke="#000" stroke-width="5.224" stroke-linecap="round" stroke-linejoin="round" stroke-opacity="0.55"><path transform="translate(-34.40,-5.00)" d="M0.5,0 L0.5,10"/><path transform="translate(-29.50,-5.00)" d="M0.2,1.6 Q1,0 2.9,0 Q5.6,0 5.6,2.7 Q5.6,4.3 4,5.8 L0,10 L5.8,10"/><path transform="translate(-19.80,-5.00)" d="M6,1.2 Q5,0 3,0 Q0,0 0,3.5 L0,6.5 Q0,10 3,10 Q5,10 6,8.8"/><path transform="translate(-9.90,-5.00)" d="M0,2.9 L2.9,0 L2.9,10 M0,10 L5.7,10"/><path transform="translate(-0.30,-5.00)" d="M0,10.8 L6,10.8"/><path transform="translate(9.60,-5.00)" d="M5.6,1.2 Q4.8,0 2.9,0 Q0.2,0 0.2,2.6 Q0.2,4.4 2.9,4.9 Q5.8,5.5 5.8,7.5 Q5.8,10 2.9,10 Q0.9,10 0,8.8"/><path transform="translate(19.30,-5.00)" d="M6,1.2 Q5,0 3,0 Q0,0 0,3.5 L0,6.5 Q0,10 3,10 Q5,10 6,8.8"/><path transform="translate(29.20,-5.00)" d="M0,0 L0,10 L5.2,10"/></g><g transform="translate(448.30,565.00) rotate(-90) scale(0.3924)" fill="none" stroke="#ececec" stroke-width="1.911" stroke-linecap="round" stroke-linejoin="round" ><path transform="translate(-34.40,-5.00)" d="M0.5,0 L0.5,10"/><path transform="translate(-29.50,-5.00)" d="M0.2,1.6 Q1,0 2.9,0 Q5.6,0 5.6,2.7 Q5.6,4.3 4,5.8 L0,10 L5.8,10"/><path transform="translate(-19.80,-5.00)" d="M6,1.2 Q5,0 3,0 Q0,0 0,3.5 L0,6.5 Q0,10 3,10 Q5,10 6,8.8"/><path transform="translate(-9.90,-5.00)" d="M0,2.9 L2.9,0 L2.9,10 M0,10 L5.7,10"/><path transform="translate(-0.30,-5.00)" d="M0,10.8 L6,10.8"/><path transform="translate(9.60,-5.00)" d="M5.6,1.2 Q4.8,0 2.9,0 Q0.2,0 0.2,2.6 Q0.2,4.4 2.9,4.9 Q5.8,5.5 5.8,7.5 Q5.8,10 2.9,10 Q0.9,10 0,8.8"/><path transform="translate(19.30,-5.00)" d="M6,1.2 Q5,0 3,0 Q0,0 0,3.5 L0,6.5 Q0,10 3,10 Q5,10 6,8.8"/><path transform="translate(29.20,-5.00)" d="M0,0 L0,10 L5.2,10"/></g>
<g transform="translate(462.45,565.00) rotate(-90) scale(0.5200)" fill="none" stroke="#000" stroke-width="4.135" stroke-linecap="round" stroke-linejoin="round" stroke-opacity="0.55"><path transform="translate(-7.50,-5.00)" d="M0,2.9 L2.9,0 L2.9,10 M0,10 L5.7,10"/><path transform="translate(2.10,-5.00)" d="M4.9,0.3 Q4,0 2.9,0 Q0,0 0,5 L0,6.8 Q0,10 2.7,10 Q5.4,10 5.4,7.1 Q5.4,4.3 2.7,4.3 Q0.6,4.3 0,5.8"/></g><g transform="translate(462.45,565.00) rotate(-90) scale(0.5200)" fill="none" stroke="#ececec" stroke-width="1.635" stroke-linecap="round" stroke-linejoin="round" ><path transform="translate(-7.50,-5.00)" d="M0,2.9 L2.9,0 L2.9,10 M0,10 L5.7,10"/><path transform="translate(2.10,-5.00)" d="M4.9,0.3 Q4,0 2.9,0 Q0,0 0,5 L0,6.8 Q0,10 2.7,10 Q5.4,10 5.4,7.1 Q5.4,4.3 2.7,4.3 Q0.6,4.3 0,5.8"/></g>
<g transform="translate(469.65,565.00) rotate(-90) scale(0.4600)" fill="none" stroke="#000" stroke-width="4.457" stroke-linecap="round" stroke-linejoin="round" stroke-opacity="0.55"><path transform="translate(-17.85,-5.00)" d="M3,3.2 L3,10 M0,6.6 L6,6.6"/><path transform="translate(-7.95,-5.00)" d="M0.3,0 L5.5,0 L2.5,4.1 Q5.8,4 5.8,7 Q5.8,10 2.8,10 Q1,10 0,9"/><path transform="translate(1.75,-5.00)" d="M0,0 L3.2,10 L6.4,0"/><path transform="translate(12.05,-5.00)" d="M0.3,0 L5.5,0 L2.5,4.1 Q5.8,4 5.8,7 Q5.8,10 2.8,10 Q1,10 0,9"/></g><g transform="translate(469.65,565.00) rotate(-90) scale(0.4600)" fill="none" stroke="#ececec" stroke-width="1.630" stroke-linecap="round" stroke-linejoin="round" ><path transform="translate(-17.85,-5.00)" d="M3,3.2 L3,10 M0,6.6 L6,6.6"/><path transform="translate(-7.95,-5.00)" d="M0.3,0 L5.5,0 L2.5,4.1 Q5.8,4 5.8,7 Q5.8,10 2.8,10 Q1,10 0,9"/><path transform="translate(1.75,-5.00)" d="M0,0 L3.2,10 L6.4,0"/><path transform="translate(12.05,-5.00)" d="M0.3,0 L5.5,0 L2.5,4.1 Q5.8,4 5.8,7 Q5.8,10 2.8,10 Q1,10 0,9"/></g>
<g transform="translate(483.80,565.00) rotate(-90) scale(0.5200)" fill="none" stroke="#000" stroke-width="4.135" stroke-linecap="round" stroke-linejoin="round" stroke-opacity="0.55"><path transform="translate(-7.70,-5.00)" d="M0,2.9 L2.9,0 L2.9,10 M0,10 L5.7,10"/><path transform="translate(1.90,-5.00)" d="M5.4,0 L0.8,0 L0.4,4.5 Q1.5,3.9 2.9,3.9 Q5.8,3.9 5.8,6.9 Q5.8,10 2.8,10 Q1,10 0,9"/></g><g transform="translate(483.80,565.00) rotate(-90) scale(0.5200)" fill="none" stroke="#ececec" stroke-width="1.635" stroke-linecap="round" stroke-linejoin="round" ><path transform="translate(-7.70,-5.00)" d="M0,2.9 L2.9,0 L2.9,10 M0,10 L5.7,10"/><path transform="translate(1.90,-5.00)" d="M5.4,0 L0.8,0 L0.4,4.5 Q1.5,3.9 2.9,3.9 Q5.8,3.9 5.8,6.9 Q5.8,10 2.8,10 Q1,10 0,9"/></g>
<g transform="translate(491.00,565.00) rotate(-90) scale(0.4600)" fill="none" stroke="#000" stroke-width="4.457" stroke-linecap="round" stroke-linejoin="round" stroke-opacity="0.55"><path transform="translate(-12.80,-5.00)" d="M6,1.2 Q5,0 3,0 Q0,0 0,3.5 L0,6.5 Q0,10 3,10 Q6,10 6,7.5 L6,5.5 L3.5,5.5"/><path transform="translate(-2.90,-5.00)" d="M0,10 L0,0 L6,10 L6,0"/><path transform="translate(7.00,-5.00)" d="M0,10 L0,0 L2.2,0 Q5.8,0 5.8,4 L5.8,6 Q5.8,10 2.2,10 L0,10"/></g><g transform="translate(491.00,565.00) rotate(-90) scale(0.4600)" fill="none" stroke="#ececec" stroke-width="1.630" stroke-linecap="round" stroke-linejoin="round" ><path transform="translate(-12.80,-5.00)" d="M6,1.2 Q5,0 3,0 Q0,0 0,3.5 L0,6.5 Q0,10 3,10 Q6,10 6,7.5 L6,5.5 L3.5,5.5"/><path transform="translate(-2.90,-5.00)" d="M0,10 L0,0 L6,10 L6,0"/><path transform="translate(7.00,-5.00)" d="M0,10 L0,0 L2.2,0 Q5.8,0 5.8,4 L5.8,6 Q5.8,10 2.2,10 L0,10"/></g>
<g transform="translate(505.15,565.00) rotate(-90) scale(0.5200)" fill="none" stroke="#000" stroke-width="4.135" stroke-linecap="round" stroke-linejoin="round" stroke-opacity="0.55"><path transform="translate(-7.80,-5.00)" d="M0,2.9 L2.9,0 L2.9,10 M0,10 L5.7,10"/><path transform="translate(1.80,-5.00)" d="M2.2,0 L0,7 L6,7 M4.7,3.2 L4.7,10"/></g><g transform="translate(505.15,565.00) rotate(-90) scale(0.5200)" fill="none" stroke="#ececec" stroke-width="1.635" stroke-linecap="round" stroke-linejoin="round" ><path transform="translate(-7.80,-5.00)" d="M0,2.9 L2.9,0 L2.9,10 M0,10 L5.7,10"/><path transform="translate(1.80,-5.00)" d="M2.2,0 L0,7 L6,7 M4.7,3.2 L4.7,10"/></g>
<text transform="translate(511.9,565) rotate(-90)" x="0" y="1.6" font-size="4" fill="#e0e0e0" text-anchor="middle" style="font-family:'Liberation Sans',sans-serif" textLength="28" lengthAdjust="spacingAndGlyphs">Net-(D1-Pad2)</text>
<g transform="translate(526.50,565.00) rotate(-90) scale(0.5200)" fill="none" stroke="#000" stroke-width="4.135" stroke-linecap="round" stroke-linejoin="round" stroke-opacity="0.55"><path transform="translate(-7.70,-5.00)" d="M0,2.9 L2.9,0 L2.9,10 M0,10 L5.7,10"/><path transform="translate(1.90,-5.00)" d="M0.3,0 L5.5,0 L2.5,4.1 Q5.8,4 5.8,7 Q5.8,10 2.8,10 Q1,10 0,9"/></g><g transform="translate(526.50,565.00) rotate(-90) scale(0.5200)" fill="none" stroke="#ececec" stroke-width="1.635" stroke-linecap="round" stroke-linejoin="round" ><path transform="translate(-7.70,-5.00)" d="M0,2.9 L2.9,0 L2.9,10 M0,10 L5.7,10"/><path transform="translate(1.90,-5.00)" d="M0.3,0 L5.5,0 L2.5,4.1 Q5.8,4 5.8,7 Q5.8,10 2.8,10 Q1,10 0,9"/></g>
<g transform="translate(533.70,565.00) rotate(-90) scale(0.3581)" fill="none" stroke="#000" stroke-width="5.725" stroke-linecap="round" stroke-linejoin="round" stroke-opacity="0.55"><path transform="translate(-37.70,-5.00)" d="M5.6,1.2 Q4.8,0 2.9,0 Q0.2,0 0.2,2.6 Q0.2,4.4 2.9,4.9 Q5.8,5.5 5.8,7.5 Q5.8,10 2.9,10 Q0.9,10 0,8.8"/><path transform="translate(-28.00,-5.00)" d="M0,10 L0,0 L3,0 Q5.7,0 5.7,2.7 Q5.7,5.4 3,5.4 L0,5.4"/><path transform="translate(-18.40,-5.00)" d="M0.5,0 L0.5,10"/><path transform="translate(-13.50,-5.00)" d="M0,2.9 L2.9,0 L2.9,10 M0,10 L5.7,10"/><path transform="translate(-3.90,-5.00)" d="M0,10.8 L6,10.8"/><path transform="translate(6.00,-5.00)" d="M0,10 L0,0 L3.6,7 L7.2,0 L7.2,10"/><path transform="translate(17.10,-5.00)" d="M3,0 Q0,0 0,4 L0,6 Q0,10 3,10 Q6,10 6,6 L6,4 Q6,0 3,0 Z"/><path transform="translate(27.00,-5.00)" d="M5.6,1.2 Q4.8,0 2.9,0 Q0.2,0 0.2,2.6 Q0.2,4.4 2.9,4.9 Q5.8,5.5 5.8,7.5 Q5.8,10 2.9,10 Q0.9,10 0,8.8"/><path transform="translate(36.70,-5.00)" d="M0.5,0 L0.5,10"/></g><g transform="translate(533.70,565.00) rotate(-90) scale(0.3581)" fill="none" stroke="#ececec" stroke-width="2.094" stroke-linecap="round" stroke-linejoin="round" ><path transform="translate(-37.70,-5.00)" d="M5.6,1.2 Q4.8,0 2.9,0 Q0.2,0 0.2,2.6 Q0.2,4.4 2.9,4.9 Q5.8,5.5 5.8,7.5 Q5.8,10 2.9,10 Q0.9,10 0,8.8"/><path transform="translate(-28.00,-5.00)" d="M0,10 L0,0 L3,0 Q5.7,0 5.7,2.7 Q5.7,5.4 3,5.4 L0,5.4"/><path transform="translate(-18.40,-5.00)" d="M0.5,0 L0.5,10"/><path transform="translate(-13.50,-5.00)" d="M0,2.9 L2.9,0 L2.9,10 M0,10 L5.7,10"/><path transform="translate(-3.90,-5.00)" d="M0,10.8 L6,10.8"/><path transform="translate(6.00,-5.00)" d="M0,10 L0,0 L3.6,7 L7.2,0 L7.2,10"/><path transform="translate(17.10,-5.00)" d="M3,0 Q0,0 0,4 L0,6 Q0,10 3,10 Q6,10 6,6 L6,4 Q6,0 3,0 Z"/><path transform="translate(27.00,-5.00)" d="M5.6,1.2 Q4.8,0 2.9,0 Q0.2,0 0.2,2.6 Q0.2,4.4 2.9,4.9 Q5.8,5.5 5.8,7.5 Q5.8,10 2.9,10 Q0.9,10 0,8.8"/><path transform="translate(36.70,-5.00)" d="M0.5,0 L0.5,10"/></g>
<g transform="translate(547.85,565.00) rotate(-90) scale(0.5200)" fill="none" stroke="#000" stroke-width="4.135" stroke-linecap="round" stroke-linejoin="round" stroke-opacity="0.55"><path transform="translate(-7.70,-5.00)" d="M0,2.9 L2.9,0 L2.9,10 M0,10 L5.7,10"/><path transform="translate(1.90,-5.00)" d="M0.2,1.6 Q1,0 2.9,0 Q5.6,0 5.6,2.7 Q5.6,4.3 4,5.8 L0,10 L5.8,10"/></g><g transform="translate(547.85,565.00) rotate(-90) scale(0.5200)" fill="none" stroke="#ececec" stroke-width="1.635" stroke-linecap="round" stroke-linejoin="round" ><path transform="translate(-7.70,-5.00)" d="M0,2.9 L2.9,0 L2.9,10 M0,10 L5.7,10"/><path transform="translate(1.90,-5.00)" d="M0.2,1.6 Q1,0 2.9,0 Q5.6,0 5.6,2.7 Q5.6,4.3 4,5.8 L0,10 L5.8,10"/></g>
<g transform="translate(555.05,565.00) rotate(-90) scale(0.3581)" fill="none" stroke="#000" stroke-width="5.725" stroke-linecap="round" stroke-linejoin="round" stroke-opacity="0.55"><path transform="translate(-37.70,-5.00)" d="M5.6,1.2 Q4.8,0 2.9,0 Q0.2,0 0.2,2.6 Q0.2,4.4 2.9,4.9 Q5.8,5.5 5.8,7.5 Q5.8,10 2.9,10 Q0.9,10 0,8.8"/><path transform="translate(-28.00,-5.00)" d="M0,10 L0,0 L3,0 Q5.7,0 5.7,2.7 Q5.7,5.4 3,5.4 L0,5.4"/><path transform="translate(-18.40,-5.00)" d="M0.5,0 L0.5,10"/><path transform="translate(-13.50,-5.00)" d="M0,2.9 L2.9,0 L2.9,10 M0,10 L5.7,10"/><path transform="translate(-3.90,-5.00)" d="M0,10.8 L6,10.8"/><path transform="translate(6.00,-5.00)" d="M0,10 L0,0 L3.6,7 L7.2,0 L7.2,10"/><path transform="translate(17.10,-5.00)" d="M0.5,0 L0.5,10"/><path transform="translate(22.00,-5.00)" d="M5.6,1.2 Q4.8,0 2.9,0 Q0.2,0 0.2,2.6 Q0.2,4.4 2.9,4.9 Q5.8,5.5 5.8,7.5 Q5.8,10 2.9,10 Q0.9,10 0,8.8"/><path transform="translate(31.70,-5.00)" d="M3,0 Q0,0 0,4 L0,6 Q0,10 3,10 Q6,10 6,6 L6,4 Q6,0 3,0 Z"/></g><g transform="translate(555.05,565.00) rotate(-90) scale(0.3581)" fill="none" stroke="#ececec" stroke-width="2.094" stroke-linecap="round" stroke-linejoin="round" ><path transform="translate(-37.70,-5.00)" d="M5.6,1.2 Q4.8,0 2.9,0 Q0.2,0 0.2,2.6 Q0.2,4.4 2.9,4.9 Q5.8,5.5 5.8,7.5 Q5.8,10 2.9,10 Q0.9,10 0,8.8"/><path transform="translate(-28.00,-5.00)" d="M0,10 L0,0 L3,0 Q5.7,0 5.7,2.7 Q5.7,5.4 3,5.4 L0,5.4"/><path transform="translate(-18.40,-5.00)" d="M0.5,0 L0.5,10"/><path transform="translate(-13.50,-5.00)" d="M0,2.9 L2.9,0 L2.9,10 M0,10 L5.7,10"/><path transform="translate(-3.90,-5.00)" d="M0,10.8 L6,10.8"/><path transform="translate(6.00,-5.00)" d="M0,10 L0,0 L3.6,7 L7.2,0 L7.2,10"/><path transform="translate(17.10,-5.00)" d="M0.5,0 L0.5,10"/><path transform="translate(22.00,-5.00)" d="M5.6,1.2 Q4.8,0 2.9,0 Q0.2,0 0.2,2.6 Q0.2,4.4 2.9,4.9 Q5.8,5.5 5.8,7.5 Q5.8,10 2.9,10 Q0.9,10 0,8.8"/><path transform="translate(31.70,-5.00)" d="M3,0 Q0,0 0,4 L0,6 Q0,10 3,10 Q6,10 6,6 L6,4 Q6,0 3,0 Z"/></g>
<g transform="translate(569.20,565.00) rotate(-90) scale(0.5200)" fill="none" stroke="#000" stroke-width="4.135" stroke-linecap="round" stroke-linejoin="round" stroke-opacity="0.55"><path transform="translate(-7.65,-5.00)" d="M0,2.9 L2.9,0 L2.9,10 M0,10 L5.7,10"/><path transform="translate(1.95,-5.00)" d="M0,2.9 L2.9,0 L2.9,10 M0,10 L5.7,10"/></g><g transform="translate(569.20,565.00) rotate(-90) scale(0.5200)" fill="none" stroke="#ececec" stroke-width="1.635" stroke-linecap="round" stroke-linejoin="round" ><path transform="translate(-7.65,-5.00)" d="M0,2.9 L2.9,0 L2.9,10 M0,10 L5.7,10"/><path transform="translate(1.95,-5.00)" d="M0,2.9 L2.9,0 L2.9,10 M0,10 L5.7,10"/></g>
<g transform="translate(576.40,565.00) rotate(-90) scale(0.3896)" fill="none" stroke="#000" stroke-width="5.262" stroke-linecap="round" stroke-linejoin="round" stroke-opacity="0.55"><path transform="translate(-34.65,-5.00)" d="M5.6,1.2 Q4.8,0 2.9,0 Q0.2,0 0.2,2.6 Q0.2,4.4 2.9,4.9 Q5.8,5.5 5.8,7.5 Q5.8,10 2.9,10 Q0.9,10 0,8.8"/><path transform="translate(-24.95,-5.00)" d="M0,10 L0,0 L3,0 Q5.7,0 5.7,2.7 Q5.7,5.4 3,5.4 L0,5.4"/><path transform="translate(-15.35,-5.00)" d="M0.5,0 L0.5,10"/><path transform="translate(-10.45,-5.00)" d="M0,2.9 L2.9,0 L2.9,10 M0,10 L5.7,10"/><path transform="translate(-0.85,-5.00)" d="M0,10.8 L6,10.8"/><path transform="translate(9.05,-5.00)" d="M5.6,1.2 Q4.8,0 2.9,0 Q0.2,0 0.2,2.6 Q0.2,4.4 2.9,4.9 Q5.8,5.5 5.8,7.5 Q5.8,10 2.9,10 Q0.9,10 0,8.8"/><path transform="translate(18.75,-5.00)" d="M6,1.2 Q5,0 3,0 Q0,0 0,3.5 L0,6.5 Q0,10 3,10 Q5,10 6,8.8"/><path transform="translate(28.65,-5.00)" d="M0,10 L0,0 M6,0 L0,6.6 M2.3,4.2 L6,10"/></g><g transform="translate(576.40,565.00) rotate(-90) scale(0.3896)" fill="none" stroke="#ececec" stroke-width="1.925" stroke-linecap="round" stroke-linejoin="round" ><path transform="translate(-34.65,-5.00)" d="M5.6,1.2 Q4.8,0 2.9,0 Q0.2,0 0.2,2.6 Q0.2,4.4 2.9,4.9 Q5.8,5.5 5.8,7.5 Q5.8,10 2.9,10 Q0.9,10 0,8.8"/><path transform="translate(-24.95,-5.00)" d="M0,10 L0,0 L3,0 Q5.7,0 5.7,2.7 Q5.7,5.4 3,5.4 L0,5.4"/><path transform="translate(-15.35,-5.00)" d="M0.5,0 L0.5,10"/><path transform="translate(-10.45,-5.00)" d="M0,2.9 L2.9,0 L2.9,10 M0,10 L5.7,10"/><path transform="translate(-0.85,-5.00)" d="M0,10.8 L6,10.8"/><path transform="translate(9.05,-5.00)" d="M5.6,1.2 Q4.8,0 2.9,0 Q0.2,0 0.2,2.6 Q0.2,4.4 2.9,4.9 Q5.8,5.5 5.8,7.5 Q5.8,10 2.9,10 Q0.9,10 0,8.8"/><path transform="translate(18.75,-5.00)" d="M6,1.2 Q5,0 3,0 Q0,0 0,3.5 L0,6.5 Q0,10 3,10 Q5,10 6,8.8"/><path transform="translate(28.65,-5.00)" d="M0,10 L0,0 M6,0 L0,6.6 M2.3,4.2 L6,10"/></g>
<g transform="translate(807.50,215.80) rotate(0) scale(1.4500)" fill="none" stroke="#000" stroke-width="1.793" stroke-linecap="round" stroke-linejoin="round" stroke-opacity="0.55"><path transform="translate(-2.85,-5.00)" d="M0,2.9 L2.9,0 L2.9,10 M0,10 L5.7,10"/></g><g transform="translate(807.50,215.80) rotate(0) scale(1.4500)" fill="none" stroke="#ececec" stroke-width="0.897" stroke-linecap="round" stroke-linejoin="round" ><path transform="translate(-2.85,-5.00)" d="M0,2.9 L2.9,0 L2.9,10 M0,10 L5.7,10"/></g>
<g transform="translate(807.50,242.80) rotate(0) scale(1.0364)" fill="none" stroke="#000" stroke-width="2.123" stroke-linecap="round" stroke-linejoin="round" stroke-opacity="0.55"><path transform="translate(-17.85,-5.00)" d="M3,3.2 L3,10 M0,6.6 L6,6.6"/><path transform="translate(-7.95,-5.00)" d="M0.3,0 L5.5,0 L2.5,4.1 Q5.8,4 5.8,7 Q5.8,10 2.8,10 Q1,10 0,9"/><path transform="translate(1.75,-5.00)" d="M0,0 L3.2,10 L6.4,0"/><path transform="translate(12.05,-5.00)" d="M0.3,0 L5.5,0 L2.5,4.1 Q5.8,4 5.8,7 Q5.8,10 2.8,10 Q1,10 0,9"/></g><g transform="translate(807.50,242.80) rotate(0) scale(1.0364)" fill="none" stroke="#d8d8d8" stroke-width="0.868" stroke-linecap="round" stroke-linejoin="round" ><path transform="translate(-17.85,-5.00)" d="M3,3.2 L3,10 M0,6.6 L6,6.6"/><path transform="translate(-7.95,-5.00)" d="M0.3,0 L5.5,0 L2.5,4.1 Q5.8,4 5.8,7 Q5.8,10 2.8,10 Q1,10 0,9"/><path transform="translate(1.75,-5.00)" d="M0,0 L3.2,10 L6.4,0"/><path transform="translate(12.05,-5.00)" d="M0.3,0 L5.5,0 L2.5,4.1 Q5.8,4 5.8,7 Q5.8,10 2.8,10 Q1,10 0,9"/></g>
<g transform="translate(891.00,215.80) rotate(0) scale(1.4500)" fill="none" stroke="#000" stroke-width="1.793" stroke-linecap="round" stroke-linejoin="round" stroke-opacity="0.55"><path transform="translate(-2.90,-5.00)" d="M0.2,1.6 Q1,0 2.9,0 Q5.6,0 5.6,2.7 Q5.6,4.3 4,5.8 L0,10 L5.8,10"/></g><g transform="translate(891.00,215.80) rotate(0) scale(1.4500)" fill="none" stroke="#ececec" stroke-width="0.897" stroke-linecap="round" stroke-linejoin="round" ><path transform="translate(-2.90,-5.00)" d="M0.2,1.6 Q1,0 2.9,0 Q5.6,0 5.6,2.7 Q5.6,4.3 4,5.8 L0,10 L5.8,10"/></g>
<g transform="translate(891.00,242.80) rotate(0) scale(0.8665)" fill="none" stroke="#000" stroke-width="2.539" stroke-linecap="round" stroke-linejoin="round" stroke-opacity="0.55"><path transform="translate(-21.35,-5.00)" d="M5.6,1.2 Q4.8,0 2.9,0 Q0.2,0 0.2,2.6 Q0.2,4.4 2.9,4.9 Q5.8,5.5 5.8,7.5 Q5.8,10 2.9,10 Q0.9,10 0,8.8"/><path transform="translate(-11.65,-5.00)" d="M0,0 L2.1,10 L4.25,3 L6.4,10 L8.5,0"/><path transform="translate(0.75,-5.00)" d="M0,10 L0,0 L2.2,0 Q5.8,0 5.8,4 L5.8,6 Q5.8,10 2.2,10 L0,10"/><path transform="translate(10.45,-5.00)" d="M0.5,0 L0.5,10"/><path transform="translate(15.35,-5.00)" d="M3,0 Q0,0 0,4 L0,6 Q0,10 3,10 Q6,10 6,6 L6,4 Q6,0 3,0 Z"/></g><g transform="translate(891.00,242.80) rotate(0) scale(0.8665)" fill="none" stroke="#d8d8d8" stroke-width="1.039" stroke-linecap="round" stroke-linejoin="round" ><path transform="translate(-21.35,-5.00)" d="M5.6,1.2 Q4.8,0 2.9,0 Q0.2,0 0.2,2.6 Q0.2,4.4 2.9,4.9 Q5.8,5.5 5.8,7.5 Q5.8,10 2.9,10 Q0.9,10 0,8.8"/><path transform="translate(-11.65,-5.00)" d="M0,0 L2.1,10 L4.25,3 L6.4,10 L8.5,0"/><path transform="translate(0.75,-5.00)" d="M0,10 L0,0 L2.2,0 Q5.8,0 5.8,4 L5.8,6 Q5.8,10 2.2,10 L0,10"/><path transform="translate(10.45,-5.00)" d="M0.5,0 L0.5,10"/><path transform="translate(15.35,-5.00)" d="M3,0 Q0,0 0,4 L0,6 Q0,10 3,10 Q6,10 6,6 L6,4 Q6,0 3,0 Z"/></g>
<g transform="translate(807.50,299.20) rotate(0) scale(1.4500)" fill="none" stroke="#000" stroke-width="1.793" stroke-linecap="round" stroke-linejoin="round" stroke-opacity="0.55"><path transform="translate(-2.90,-5.00)" d="M0.3,0 L5.5,0 L2.5,4.1 Q5.8,4 5.8,7 Q5.8,10 2.8,10 Q1,10 0,9"/></g><g transform="translate(807.50,299.20) rotate(0) scale(1.4500)" fill="none" stroke="#ececec" stroke-width="0.897" stroke-linecap="round" stroke-linejoin="round" ><path transform="translate(-2.90,-5.00)" d="M0.3,0 L5.5,0 L2.5,4.1 Q5.8,4 5.8,7 Q5.8,10 2.8,10 Q1,10 0,9"/></g>
<g transform="translate(807.50,326.20) rotate(0) scale(1.4453)" fill="none" stroke="#000" stroke-width="1.695" stroke-linecap="round" stroke-linejoin="round" stroke-opacity="0.55"><path transform="translate(-12.80,-5.00)" d="M6,1.2 Q5,0 3,0 Q0,0 0,3.5 L0,6.5 Q0,10 3,10 Q6,10 6,7.5 L6,5.5 L3.5,5.5"/><path transform="translate(-2.90,-5.00)" d="M0,10 L0,0 L6,10 L6,0"/><path transform="translate(7.00,-5.00)" d="M0,10 L0,0 L2.2,0 Q5.8,0 5.8,4 L5.8,6 Q5.8,10 2.2,10 L0,10"/></g><g transform="translate(807.50,326.20) rotate(0) scale(1.4453)" fill="none" stroke="#ececec" stroke-width="0.796" stroke-linecap="round" stroke-linejoin="round" ><path transform="translate(-12.80,-5.00)" d="M6,1.2 Q5,0 3,0 Q0,0 0,3.5 L0,6.5 Q0,10 3,10 Q6,10 6,7.5 L6,5.5 L3.5,5.5"/><path transform="translate(-2.90,-5.00)" d="M0,10 L0,0 L6,10 L6,0"/><path transform="translate(7.00,-5.00)" d="M0,10 L0,0 L2.2,0 Q5.8,0 5.8,4 L5.8,6 Q5.8,10 2.2,10 L0,10"/></g>
<g transform="translate(891.00,299.20) rotate(0) scale(1.4500)" fill="none" stroke="#000" stroke-width="1.793" stroke-linecap="round" stroke-linejoin="round" stroke-opacity="0.55"><path transform="translate(-3.00,-5.00)" d="M2.2,0 L0,7 L6,7 M4.7,3.2 L4.7,10"/></g><g transform="translate(891.00,299.20) rotate(0) scale(1.4500)" fill="none" stroke="#ececec" stroke-width="0.897" stroke-linecap="round" stroke-linejoin="round" ><path transform="translate(-3.00,-5.00)" d="M2.2,0 L0,7 L6,7 M4.7,3.2 L4.7,10"/></g>
<g transform="translate(891.00,326.20) rotate(0) scale(0.7856)" fill="none" stroke="#000" stroke-width="2.801" stroke-linecap="round" stroke-linejoin="round" stroke-opacity="0.55"><path transform="translate(-23.55,-5.00)" d="M5.6,1.2 Q4.8,0 2.9,0 Q0.2,0 0.2,2.6 Q0.2,4.4 2.9,4.9 Q5.8,5.5 5.8,7.5 Q5.8,10 2.9,10 Q0.9,10 0,8.8"/><path transform="translate(-13.85,-5.00)" d="M0,0 L2.1,10 L4.25,3 L6.4,10 L8.5,0"/><path transform="translate(-1.45,-5.00)" d="M6,1.2 Q5,0 3,0 Q0,0 0,3.5 L0,6.5 Q0,10 3,10 Q5,10 6,8.8"/><path transform="translate(8.45,-5.00)" d="M0,0 L0,10 L5.2,10"/><path transform="translate(17.55,-5.00)" d="M0,10 L0,0 M6,0 L0,6.6 M2.3,4.2 L6,10"/></g><g transform="translate(891.00,326.20) rotate(0) scale(0.7856)" fill="none" stroke="#d8d8d8" stroke-width="1.146" stroke-linecap="round" stroke-linejoin="round" ><path transform="translate(-23.55,-5.00)" d="M5.6,1.2 Q4.8,0 2.9,0 Q0.2,0 0.2,2.6 Q0.2,4.4 2.9,4.9 Q5.8,5.5 5.8,7.5 Q5.8,10 2.9,10 Q0.9,10 0,8.8"/><path transform="translate(-13.85,-5.00)" d="M0,0 L2.1,10 L4.25,3 L6.4,10 L8.5,0"/><path transform="translate(-1.45,-5.00)" d="M6,1.2 Q5,0 3,0 Q0,0 0,3.5 L0,6.5 Q0,10 3,10 Q5,10 6,8.8"/><path transform="translate(8.45,-5.00)" d="M0,0 L0,10 L5.2,10"/><path transform="translate(17.55,-5.00)" d="M0,10 L0,0 M6,0 L0,6.6 M2.3,4.2 L6,10"/></g>
<g transform="translate(807.50,382.60) rotate(0) scale(1.4500)" fill="none" stroke="#000" stroke-width="1.793" stroke-linecap="round" stroke-linejoin="round" stroke-opacity="0.55"><path transform="translate(-2.90,-5.00)" d="M5.4,0 L0.8,0 L0.4,4.5 Q1.5,3.9 2.9,3.9 Q5.8,3.9 5.8,6.9 Q5.8,10 2.8,10 Q1,10 0,9"/></g><g transform="translate(807.50,382.60) rotate(0) scale(1.4500)" fill="none" stroke="#ececec" stroke-width="0.897" stroke-linecap="round" stroke-linejoin="round" ><path transform="translate(-2.90,-5.00)" d="M5.4,0 L0.8,0 L0.4,4.5 Q1.5,3.9 2.9,3.9 Q5.8,3.9 5.8,6.9 Q5.8,10 2.8,10 Q1,10 0,9"/></g>
<g transform="translate(807.50,409.60) rotate(0) scale(1.4453)" fill="none" stroke="#000" stroke-width="1.695" stroke-linecap="round" stroke-linejoin="round" stroke-opacity="0.55"><path transform="translate(-12.80,-5.00)" d="M6,1.2 Q5,0 3,0 Q0,0 0,3.5 L0,6.5 Q0,10 3,10 Q6,10 6,7.5 L6,5.5 L3.5,5.5"/><path transform="translate(-2.90,-5.00)" d="M0,10 L0,0 L6,10 L6,0"/><path transform="translate(7.00,-5.00)" d="M0,10 L0,0 L2.2,0 Q5.8,0 5.8,4 L5.8,6 Q5.8,10 2.2,10 L0,10"/></g><g transform="translate(807.50,409.60) rotate(0) scale(1.4453)" fill="none" stroke="#ececec" stroke-width="0.796" stroke-linecap="round" stroke-linejoin="round" ><path transform="translate(-12.80,-5.00)" d="M6,1.2 Q5,0 3,0 Q0,0 0,3.5 L0,6.5 Q0,10 3,10 Q6,10 6,7.5 L6,5.5 L3.5,5.5"/><path transform="translate(-2.90,-5.00)" d="M0,10 L0,0 L6,10 L6,0"/><path transform="translate(7.00,-5.00)" d="M0,10 L0,0 L2.2,0 Q5.8,0 5.8,4 L5.8,6 Q5.8,10 2.2,10 L0,10"/></g>
<g transform="translate(891.00,382.60) rotate(0) scale(1.4500)" fill="none" stroke="#000" stroke-width="1.793" stroke-linecap="round" stroke-linejoin="round" stroke-opacity="0.55"><path transform="translate(-2.70,-5.00)" d="M4.9,0.3 Q4,0 2.9,0 Q0,0 0,5 L0,6.8 Q0,10 2.7,10 Q5.4,10 5.4,7.1 Q5.4,4.3 2.7,4.3 Q0.6,4.3 0,5.8"/></g><g transform="translate(891.00,382.60) rotate(0) scale(1.4500)" fill="none" stroke="#ececec" stroke-width="0.897" stroke-linecap="round" stroke-linejoin="round" ><path transform="translate(-2.70,-5.00)" d="M4.9,0.3 Q4,0 2.9,0 Q0,0 0,5 L0,6.8 Q0,10 2.7,10 Q5.4,10 5.4,7.1 Q5.4,4.3 2.7,4.3 Q0.6,4.3 0,5.8"/></g>
<g transform="translate(891.00,409.60) rotate(0) scale(0.5378)" fill="none" stroke="#000" stroke-width="4.091" stroke-linecap="round" stroke-linejoin="round" stroke-opacity="0.55"><path transform="translate(-34.40,-5.00)" d="M0.5,0 L0.5,10"/><path transform="translate(-29.50,-5.00)" d="M0.2,1.6 Q1,0 2.9,0 Q5.6,0 5.6,2.7 Q5.6,4.3 4,5.8 L0,10 L5.8,10"/><path transform="translate(-19.80,-5.00)" d="M6,1.2 Q5,0 3,0 Q0,0 0,3.5 L0,6.5 Q0,10 3,10 Q5,10 6,8.8"/><path transform="translate(-9.90,-5.00)" d="M0,2.9 L2.9,0 L2.9,10 M0,10 L5.7,10"/><path transform="translate(-0.30,-5.00)" d="M0,10.8 L6,10.8"/><path transform="translate(9.60,-5.00)" d="M5.6,1.2 Q4.8,0 2.9,0 Q0.2,0 0.2,2.6 Q0.2,4.4 2.9,4.9 Q5.8,5.5 5.8,7.5 Q5.8,10 2.9,10 Q0.9,10 0,8.8"/><path transform="translate(19.30,-5.00)" d="M6,1.2 Q5,0 3,0 Q0,0 0,3.5 L0,6.5 Q0,10 3,10 Q5,10 6,8.8"/><path transform="translate(29.20,-5.00)" d="M0,0 L0,10 L5.2,10"/></g><g transform="translate(891.00,409.60) rotate(0) scale(0.5378)" fill="none" stroke="#d8d8d8" stroke-width="1.674" stroke-linecap="round" stroke-linejoin="round" ><path transform="translate(-34.40,-5.00)" d="M0.5,0 L0.5,10"/><path transform="translate(-29.50,-5.00)" d="M0.2,1.6 Q1,0 2.9,0 Q5.6,0 5.6,2.7 Q5.6,4.3 4,5.8 L0,10 L5.8,10"/><path transform="translate(-19.80,-5.00)" d="M6,1.2 Q5,0 3,0 Q0,0 0,3.5 L0,6.5 Q0,10 3,10 Q5,10 6,8.8"/><path transform="translate(-9.90,-5.00)" d="M0,2.9 L2.9,0 L2.9,10 M0,10 L5.7,10"/><path transform="translate(-0.30,-5.00)" d="M0,10.8 L6,10.8"/><path transform="translate(9.60,-5.00)" d="M5.6,1.2 Q4.8,0 2.9,0 Q0.2,0 0.2,2.6 Q0.2,4.4 2.9,4.9 Q5.8,5.5 5.8,7.5 Q5.8,10 2.9,10 Q0.9,10 0,8.8"/><path transform="translate(19.30,-5.00)" d="M6,1.2 Q5,0 3,0 Q0,0 0,3.5 L0,6.5 Q0,10 3,10 Q5,10 6,8.8"/><path transform="translate(29.20,-5.00)" d="M0,0 L0,10 L5.2,10"/></g>
<g transform="translate(807.50,478.50) rotate(0) scale(1.4500)" fill="none" stroke="#000" stroke-width="1.793" stroke-linecap="round" stroke-linejoin="round" stroke-opacity="0.55"><path transform="translate(-3.40,-5.00)" d="M0,0 L6.8,0 L2.3,10"/></g><g transform="translate(807.50,478.50) rotate(0) scale(1.4500)" fill="none" stroke="#ececec" stroke-width="0.897" stroke-linecap="round" stroke-linejoin="round" ><path transform="translate(-3.40,-5.00)" d="M0,0 L6.8,0 L2.3,10"/></g>
<g transform="translate(891.00,466.00) rotate(0) scale(1.4500)" fill="none" stroke="#000" stroke-width="1.793" stroke-linecap="round" stroke-linejoin="round" stroke-opacity="0.55"><path transform="translate(-2.90,-5.00)" d="M2.9,4.6 Q0.4,4.6 0.4,2.3 Q0.4,0 2.9,0 Q5.4,0 5.4,2.3 Q5.4,4.6 2.9,4.6 Q0,4.6 0,7.3 Q0,10 2.9,10 Q5.8,10 5.8,7.3 Q5.8,4.6 2.9,4.6 Z"/></g><g transform="translate(891.00,466.00) rotate(0) scale(1.4500)" fill="none" stroke="#ececec" stroke-width="0.897" stroke-linecap="round" stroke-linejoin="round" ><path transform="translate(-2.90,-5.00)" d="M2.9,4.6 Q0.4,4.6 0.4,2.3 Q0.4,0 2.9,0 Q5.4,0 5.4,2.3 Q5.4,4.6 2.9,4.6 Q0,4.6 0,7.3 Q0,10 2.9,10 Q5.8,10 5.8,7.3 Q5.8,4.6 2.9,4.6 Z"/></g>
<g transform="translate(891.00,493.00) rotate(0) scale(0.5301)" fill="none" stroke="#000" stroke-width="4.150" stroke-linecap="round" stroke-linejoin="round" stroke-opacity="0.55"><path transform="translate(-34.90,-5.00)" d="M0.5,0 L0.5,10"/><path transform="translate(-30.00,-5.00)" d="M0.2,1.6 Q1,0 2.9,0 Q5.6,0 5.6,2.7 Q5.6,4.3 4,5.8 L0,10 L5.8,10"/><path transform="translate(-20.30,-5.00)" d="M6,1.2 Q5,0 3,0 Q0,0 0,3.5 L0,6.5 Q0,10 3,10 Q5,10 6,8.8"/><path transform="translate(-10.40,-5.00)" d="M0,2.9 L2.9,0 L2.9,10 M0,10 L5.7,10"/><path transform="translate(-0.80,-5.00)" d="M0,10.8 L6,10.8"/><path transform="translate(9.10,-5.00)" d="M5.6,1.2 Q4.8,0 2.9,0 Q0.2,0 0.2,2.6 Q0.2,4.4 2.9,4.9 Q5.8,5.5 5.8,7.5 Q5.8,10 2.9,10 Q0.9,10 0,8.8"/><path transform="translate(18.80,-5.00)" d="M0,10 L0,0 L2.2,0 Q5.8,0 5.8,4 L5.8,6 Q5.8,10 2.2,10 L0,10"/><path transform="translate(28.50,-5.00)" d="M0,10 L3.2,0 L6.4,10 M1.1,6.6 L5.3,6.6"/></g><g transform="translate(891.00,493.00) rotate(0) scale(0.5301)" fill="none" stroke="#d8d8d8" stroke-width="1.698" stroke-linecap="round" stroke-linejoin="round" ><path transform="translate(-34.90,-5.00)" d="M0.5,0 L0.5,10"/><path transform="translate(-30.00,-5.00)" d="M0.2,1.6 Q1,0 2.9,0 Q5.6,0 5.6,2.7 Q5.6,4.3 4,5.8 L0,10 L5.8,10"/><path transform="translate(-20.30,-5.00)" d="M6,1.2 Q5,0 3,0 Q0,0 0,3.5 L0,6.5 Q0,10 3,10 Q5,10 6,8.8"/><path transform="translate(-10.40,-5.00)" d="M0,2.9 L2.9,0 L2.9,10 M0,10 L5.7,10"/><path transform="translate(-0.80,-5.00)" d="M0,10.8 L6,10.8"/><path transform="translate(9.10,-5.00)" d="M5.6,1.2 Q4.8,0 2.9,0 Q0.2,0 0.2,2.6 Q0.2,4.4 2.9,4.9 Q5.8,5.5 5.8,7.5 Q5.8,10 2.9,10 Q0.9,10 0,8.8"/><path transform="translate(18.80,-5.00)" d="M0,10 L0,0 L2.2,0 Q5.8,0 5.8,4 L5.8,6 Q5.8,10 2.2,10 L0,10"/><path transform="translate(28.50,-5.00)" d="M0,10 L3.2,0 L6.4,10 M1.1,6.6 L5.3,6.6"/></g>
<g transform="translate(807.50,549.40) rotate(0) scale(1.4500)" fill="none" stroke="#000" stroke-width="1.793" stroke-linecap="round" stroke-linejoin="round" stroke-opacity="0.55"><path transform="translate(-2.80,-5.00)" d="M5.6,4.2 Q4.8,5.8 2.8,5.8 Q0,5.8 0,2.9 Q0,0 2.8,0 Q5.6,0 5.6,4 L5.6,5.5 Q5.6,10 2.5,10 Q1.3,10 0.6,9.6"/></g><g transform="translate(807.50,549.40) rotate(0) scale(1.4500)" fill="none" stroke="#ececec" stroke-width="0.897" stroke-linecap="round" stroke-linejoin="round" ><path transform="translate(-2.80,-5.00)" d="M5.6,4.2 Q4.8,5.8 2.8,5.8 Q0,5.8 0,2.9 Q0,0 2.8,0 Q5.6,0 5.6,4 L5.6,5.5 Q5.6,10 2.5,10 Q1.3,10 0.6,9.6"/></g>
<g transform="translate(807.50,576.40) rotate(0) scale(1.0364)" fill="none" stroke="#000" stroke-width="2.123" stroke-linecap="round" stroke-linejoin="round" stroke-opacity="0.55"><path transform="translate(-17.85,-5.00)" d="M3,3.2 L3,10 M0,6.6 L6,6.6"/><path transform="translate(-7.95,-5.00)" d="M0.3,0 L5.5,0 L2.5,4.1 Q5.8,4 5.8,7 Q5.8,10 2.8,10 Q1,10 0,9"/><path transform="translate(1.75,-5.00)" d="M0,0 L3.2,10 L6.4,0"/><path transform="translate(12.05,-5.00)" d="M0.3,0 L5.5,0 L2.5,4.1 Q5.8,4 5.8,7 Q5.8,10 2.8,10 Q1,10 0,9"/></g><g transform="translate(807.50,576.40) rotate(0) scale(1.0364)" fill="none" stroke="#d8d8d8" stroke-width="0.868" stroke-linecap="round" stroke-linejoin="round" ><path transform="translate(-17.85,-5.00)" d="M3,3.2 L3,10 M0,6.6 L6,6.6"/><path transform="translate(-7.95,-5.00)" d="M0.3,0 L5.5,0 L2.5,4.1 Q5.8,4 5.8,7 Q5.8,10 2.8,10 Q1,10 0,9"/><path transform="translate(1.75,-5.00)" d="M0,0 L3.2,10 L6.4,0"/><path transform="translate(12.05,-5.00)" d="M0.3,0 L5.5,0 L2.5,4.1 Q5.8,4 5.8,7 Q5.8,10 2.8,10 Q1,10 0,9"/></g>
<g transform="translate(891.00,549.40) rotate(0) scale(1.4500)" fill="none" stroke="#000" stroke-width="1.793" stroke-linecap="round" stroke-linejoin="round" stroke-opacity="0.55"><path transform="translate(-7.70,-5.00)" d="M0,2.9 L2.9,0 L2.9,10 M0,10 L5.7,10"/><path transform="translate(1.90,-5.00)" d="M2.9,0 Q0,0 0,4 L0,6 Q0,10 2.9,10 Q5.8,10 5.8,6 L5.8,4 Q5.8,0 2.9,0 Z"/></g><g transform="translate(891.00,549.40) rotate(0) scale(1.4500)" fill="none" stroke="#ececec" stroke-width="0.897" stroke-linecap="round" stroke-linejoin="round" ><path transform="translate(-7.70,-5.00)" d="M0,2.9 L2.9,0 L2.9,10 M0,10 L5.7,10"/><path transform="translate(1.90,-5.00)" d="M2.9,0 Q0,0 0,4 L0,6 Q0,10 2.9,10 Q5.8,10 5.8,6 L5.8,4 Q5.8,0 2.9,0 Z"/></g>
<g transform="translate(891.00,576.40) rotate(0) scale(0.6250)" fill="none" stroke="#000" stroke-width="3.520" stroke-linecap="round" stroke-linejoin="round" stroke-opacity="0.55"><path transform="translate(-29.60,-5.00)" d="M5.6,1.2 Q4.8,0 2.9,0 Q0.2,0 0.2,2.6 Q0.2,4.4 2.9,4.9 Q5.8,5.5 5.8,7.5 Q5.8,10 2.9,10 Q0.9,10 0,8.8"/><path transform="translate(-19.90,-5.00)" d="M0,10 L0,0 L3,0 Q5.7,0 5.7,2.7 Q5.7,5.4 3,5.4 L0,5.4"/><path transform="translate(-10.30,-5.00)" d="M0.5,0 L0.5,10"/><path transform="translate(-5.40,-5.00)" d="M0,2.9 L2.9,0 L2.9,10 M0,10 L5.7,10"/><path transform="translate(4.20,-5.00)" d="M0,10.8 L6,10.8"/><path transform="translate(14.10,-5.00)" d="M5.6,1.2 Q4.8,0 2.9,0 Q0.2,0 0.2,2.6 Q0.2,4.4 2.9,4.9 Q5.8,5.5 5.8,7.5 Q5.8,10 2.9,10 Q0.9,10 0,8.8"/><path transform="translate(23.80,-5.00)" d="M5.6,1.2 Q4.8,0 2.9,0 Q0.2,0 0.2,2.6 Q0.2,4.4 2.9,4.9 Q5.8,5.5 5.8,7.5 Q5.8,10 2.9,10 Q0.9,10 0,8.8"/></g><g transform="translate(891.00,576.40) rotate(0) scale(0.6250)" fill="none" stroke="#d8d8d8" stroke-width="1.440" stroke-linecap="round" stroke-linejoin="round" ><path transform="translate(-29.60,-5.00)" d="M5.6,1.2 Q4.8,0 2.9,0 Q0.2,0 0.2,2.6 Q0.2,4.4 2.9,4.9 Q5.8,5.5 5.8,7.5 Q5.8,10 2.9,10 Q0.9,10 0,8.8"/><path transform="translate(-19.90,-5.00)" d="M0,10 L0,0 L3,0 Q5.7,0 5.7,2.7 Q5.7,5.4 3,5.4 L0,5.4"/><path transform="translate(-10.30,-5.00)" d="M0.5,0 L0.5,10"/><path transform="translate(-5.40,-5.00)" d="M0,2.9 L2.9,0 L2.9,10 M0,10 L5.7,10"/><path transform="translate(4.20,-5.00)" d="M0,10.8 L6,10.8"/><path transform="translate(14.10,-5.00)" d="M5.6,1.2 Q4.8,0 2.9,0 Q0.2,0 0.2,2.6 Q0.2,4.4 2.9,4.9 Q5.8,5.5 5.8,7.5 Q5.8,10 2.9,10 Q0.9,10 0,8.8"/><path transform="translate(23.80,-5.00)" d="M5.6,1.2 Q4.8,0 2.9,0 Q0.2,0 0.2,2.6 Q0.2,4.4 2.9,4.9 Q5.8,5.5 5.8,7.5 Q5.8,10 2.9,10 Q0.9,10 0,8.8"/></g>
<g transform="translate(807.50,632.80) rotate(0) scale(1.4500)" fill="none" stroke="#000" stroke-width="1.793" stroke-linecap="round" stroke-linejoin="round" stroke-opacity="0.55"><path transform="translate(-7.65,-5.00)" d="M0,2.9 L2.9,0 L2.9,10 M0,10 L5.7,10"/><path transform="translate(1.95,-5.00)" d="M0,2.9 L2.9,0 L2.9,10 M0,10 L5.7,10"/></g><g transform="translate(807.50,632.80) rotate(0) scale(1.4500)" fill="none" stroke="#ececec" stroke-width="0.897" stroke-linecap="round" stroke-linejoin="round" ><path transform="translate(-7.65,-5.00)" d="M0,2.9 L2.9,0 L2.9,10 M0,10 L5.7,10"/><path transform="translate(1.95,-5.00)" d="M0,2.9 L2.9,0 L2.9,10 M0,10 L5.7,10"/></g>
<g transform="translate(807.50,659.80) rotate(0) scale(1.0364)" fill="none" stroke="#000" stroke-width="2.123" stroke-linecap="round" stroke-linejoin="round" stroke-opacity="0.55"><path transform="translate(-17.85,-5.00)" d="M3,3.2 L3,10 M0,6.6 L6,6.6"/><path transform="translate(-7.95,-5.00)" d="M0.3,0 L5.5,0 L2.5,4.1 Q5.8,4 5.8,7 Q5.8,10 2.8,10 Q1,10 0,9"/><path transform="translate(1.75,-5.00)" d="M0,0 L3.2,10 L6.4,0"/><path transform="translate(12.05,-5.00)" d="M0.3,0 L5.5,0 L2.5,4.1 Q5.8,4 5.8,7 Q5.8,10 2.8,10 Q1,10 0,9"/></g><g transform="translate(807.50,659.80) rotate(0) scale(1.0364)" fill="none" stroke="#d8d8d8" stroke-width="0.868" stroke-linecap="round" stroke-linejoin="round" ><path transform="translate(-17.85,-5.00)" d="M3,3.2 L3,10 M0,6.6 L6,6.6"/><path transform="translate(-7.95,-5.00)" d="M0.3,0 L5.5,0 L2.5,4.1 Q5.8,4 5.8,7 Q5.8,10 2.8,10 Q1,10 0,9"/><path transform="translate(1.75,-5.00)" d="M0,0 L3.2,10 L6.4,0"/><path transform="translate(12.05,-5.00)" d="M0.3,0 L5.5,0 L2.5,4.1 Q5.8,4 5.8,7 Q5.8,10 2.8,10 Q1,10 0,9"/></g>
<g transform="translate(891.00,632.80) rotate(0) scale(1.4500)" fill="none" stroke="#000" stroke-width="1.793" stroke-linecap="round" stroke-linejoin="round" stroke-opacity="0.55"><path transform="translate(-7.70,-5.00)" d="M0,2.9 L2.9,0 L2.9,10 M0,10 L5.7,10"/><path transform="translate(1.90,-5.00)" d="M0.2,1.6 Q1,0 2.9,0 Q5.6,0 5.6,2.7 Q5.6,4.3 4,5.8 L0,10 L5.8,10"/></g><g transform="translate(891.00,632.80) rotate(0) scale(1.4500)" fill="none" stroke="#ececec" stroke-width="0.897" stroke-linecap="round" stroke-linejoin="round" ><path transform="translate(-7.70,-5.00)" d="M0,2.9 L2.9,0 L2.9,10 M0,10 L5.7,10"/><path transform="translate(1.90,-5.00)" d="M0.2,1.6 Q1,0 2.9,0 Q5.6,0 5.6,2.7 Q5.6,4.3 4,5.8 L0,10 L5.8,10"/></g>
<g transform="translate(891.00,659.80) rotate(0) scale(0.5339)" fill="none" stroke="#000" stroke-width="4.121" stroke-linecap="round" stroke-linejoin="round" stroke-opacity="0.55"><path transform="translate(-34.65,-5.00)" d="M5.6,1.2 Q4.8,0 2.9,0 Q0.2,0 0.2,2.6 Q0.2,4.4 2.9,4.9 Q5.8,5.5 5.8,7.5 Q5.8,10 2.9,10 Q0.9,10 0,8.8"/><path transform="translate(-24.95,-5.00)" d="M0,10 L0,0 L3,0 Q5.7,0 5.7,2.7 Q5.7,5.4 3,5.4 L0,5.4"/><path transform="translate(-15.35,-5.00)" d="M0.5,0 L0.5,10"/><path transform="translate(-10.45,-5.00)" d="M0,2.9 L2.9,0 L2.9,10 M0,10 L5.7,10"/><path transform="translate(-0.85,-5.00)" d="M0,10.8 L6,10.8"/><path transform="translate(9.05,-5.00)" d="M5.6,1.2 Q4.8,0 2.9,0 Q0.2,0 0.2,2.6 Q0.2,4.4 2.9,4.9 Q5.8,5.5 5.8,7.5 Q5.8,10 2.9,10 Q0.9,10 0,8.8"/><path transform="translate(18.75,-5.00)" d="M6,1.2 Q5,0 3,0 Q0,0 0,3.5 L0,6.5 Q0,10 3,10 Q5,10 6,8.8"/><path transform="translate(28.65,-5.00)" d="M0,10 L0,0 M6,0 L0,6.6 M2.3,4.2 L6,10"/></g><g transform="translate(891.00,659.80) rotate(0) scale(0.5339)" fill="none" stroke="#d8d8d8" stroke-width="1.686" stroke-linecap="round" stroke-linejoin="round" ><path transform="translate(-34.65,-5.00)" d="M5.6,1.2 Q4.8,0 2.9,0 Q0.2,0 0.2,2.6 Q0.2,4.4 2.9,4.9 Q5.8,5.5 5.8,7.5 Q5.8,10 2.9,10 Q0.9,10 0,8.8"/><path transform="translate(-24.95,-5.00)" d="M0,10 L0,0 L3,0 Q5.7,0 5.7,2.7 Q5.7,5.4 3,5.4 L0,5.4"/><path transform="translate(-15.35,-5.00)" d="M0.5,0 L0.5,10"/><path transform="translate(-10.45,-5.00)" d="M0,2.9 L2.9,0 L2.9,10 M0,10 L5.7,10"/><path transform="translate(-0.85,-5.00)" d="M0,10.8 L6,10.8"/><path transform="translate(9.05,-5.00)" d="M5.6,1.2 Q4.8,0 2.9,0 Q0.2,0 0.2,2.6 Q0.2,4.4 2.9,4.9 Q5.8,5.5 5.8,7.5 Q5.8,10 2.9,10 Q0.9,10 0,8.8"/><path transform="translate(18.75,-5.00)" d="M6,1.2 Q5,0 3,0 Q0,0 0,3.5 L0,6.5 Q0,10 3,10 Q5,10 6,8.8"/><path transform="translate(28.65,-5.00)" d="M0,10 L0,0 M6,0 L0,6.6 M2.3,4.2 L6,10"/></g>
</g>
<text x="3.56" y="9.00" font-size="9.86" fill="#8c8c8c" textLength="3.75" lengthAdjust="spacingAndGlyphs" style="font-family:'Liberation Mono',monospace;" >1</text>
<text x="14.32" y="9.00" font-size="9.86" fill="#8c8c8c" textLength="5.87" lengthAdjust="spacingAndGlyphs" style="font-family:'Liberation Mono',monospace;" >2</text>
<text x="26.38" y="9.00" font-size="9.86" fill="#8c8c8c" textLength="5.75" lengthAdjust="spacingAndGlyphs" style="font-family:'Liberation Mono',monospace;" >3</text>
<text x="38.55" y="9.00" font-size="9.86" fill="#a8a890" textLength="5.40" lengthAdjust="spacingAndGlyphs" style="font-family:'Liberation Mono',monospace;" >4</text>
<text x="57.70" y="9.00" font-size="9.86" fill="#8c8c8c" textLength="5.10" lengthAdjust="spacingAndGlyphs" style="font-family:'Liberation Mono',monospace;" >T</text>
<text x="461.97" y="8.80" font-size="9.10" fill="#b4b4b4" textLength="352.78" lengthAdjust="spacingAndGlyphs" style="font-family:'Liberation Mono',monospace;" >Pcbnew (after 2015-may-25 BZR unknown)-product /aux/screencast/circuit/circuit.kicad.pcb</text>
<text x="2.91" y="21.80" font-size="10.17" fill="#bcbcbc" textLength="13.89" lengthAdjust="spacingAndGlyphs" style="font-family:'Liberation Sans',sans-serif;" >File</text>
<rect x="2.9" y="23" width="5.3" height="0.9" fill="#b0b0b0"/>
<text x="24.27" y="21.80" font-size="10.17" fill="#bcbcbc" textLength="15.81" lengthAdjust="spacingAndGlyphs" style="font-family:'Liberation Sans',sans-serif;" >Edit</text>
<rect x="24.3" y="23" width="6.1" height="0.9" fill="#b0b0b0"/>
<text x="48.45" y="21.80" font-size="10.17" fill="#bcbcbc" textLength="19.54" lengthAdjust="spacingAndGlyphs" style="font-family:'Liberation Sans',sans-serif;" >View</text>
<rect x="48.5" y="23" width="6.1" height="0.9" fill="#b0b0b0"/>
<text x="75.24" y="21.80" font-size="10.17" fill="#bcbcbc" textLength="23.70" lengthAdjust="spacingAndGlyphs" style="font-family:'Liberation Sans',sans-serif;" >Place</text>
<rect x="75.2" y="23" width="6.3" height="0.9" fill="#b0b0b0"/>
<text x="106.28" y="21.80" font-size="10.17" fill="#bcbcbc" textLength="24.16" lengthAdjust="spacingAndGlyphs" style="font-family:'Liberation Sans',sans-serif;" >Route</text>
<rect x="117.9" y="23" width="5.0" height="0.9" fill="#b0b0b0"/>
<text x="138.24" y="21.80" font-size="10.17" fill="#bcbcbc" textLength="51.11" lengthAdjust="spacingAndGlyphs" style="font-family:'Liberation Sans',sans-serif;" >Preferences</text>
<rect x="144.6" y="23" width="3.2" height="0.9" fill="#b0b0b0"/>
<text x="196.72" y="21.80" font-size="10.17" fill="#bcbcbc" textLength="50.91" lengthAdjust="spacingAndGlyphs" style="font-family:'Liberation Sans',sans-serif;" >Dimensions</text>
<rect x="205.9" y="23" width="8.1" height="0.9" fill="#b0b0b0"/>
<text x="256.02" y="21.80" font-size="10.17" fill="#bcbcbc" textLength="20.48" lengthAdjust="spacingAndGlyphs" style="font-family:'Liberation Sans',sans-serif;" >Tools</text>
<rect x="256.0" y="23" width="5.4" height="0.9" fill="#b0b0b0"/>
<text x="283.77" y="21.80" font-size="10.17" fill="#bcbcbc" textLength="54.58" lengthAdjust="spacingAndGlyphs" style="font-family:'Liberation Sans',sans-serif;" >Design Rules</text>
<rect x="283.8" y="23" width="6.6" height="0.9" fill="#b0b0b0"/>
<text x="345.42" y="21.80" font-size="10.17" fill="#bcbcbc" textLength="19.98" lengthAdjust="spacingAndGlyphs" style="font-family:'Liberation Sans',sans-serif;" >Help</text>
<rect x="345.4" y="23" width="7.0" height="0.9" fill="#b0b0b0"/>
<text x="7.31" y="68.00" font-size="10.17" fill="#a6a6a6" textLength="126.81" lengthAdjust="spacingAndGlyphs" style="font-family:'Liberation Sans',sans-serif;" >Track: 0.250 mm (9.84 mils) *</text>
<text x="155.45" y="68.00" font-size="10.17" fill="#a6a6a6" textLength="204.67" lengthAdjust="spacingAndGlyphs" style="font-family:'Liberation Sans',sans-serif;" >Via: 0.60 mm (23.6 mils)/ 0.40 mm (15.7 mils) *</text>
<text x="417.11" y="68.00" font-size="10.17" fill="#a6a6a6" textLength="120.50" lengthAdjust="spacingAndGlyphs" style="font-family:'Liberation Sans',sans-serif;" >Grid: 0.1000 mm (3.94 mils)</text>
<text x="575.70" y="68.00" font-size="10.17" fill="#a6a6a6" textLength="52.71" lengthAdjust="spacingAndGlyphs" style="font-family:'Liberation Sans',sans-serif;" >Zoom 13.75</text>
<rect x="142.0" y="62" width="1.2" height="1.2" fill="#777"/><rect x="142.0" y="65.5" width="1.2" height="1.2" fill="#777"/>
<rect x="369.0" y="62" width="1.2" height="1.2" fill="#777"/><rect x="369.0" y="65.5" width="1.2" height="1.2" fill="#777"/>
<rect x="555.6" y="62" width="1.2" height="1.2" fill="#777"/><rect x="555.6" y="65.5" width="1.2" height="1.2" fill="#777"/>
<rect x="646.0" y="62" width="1.2" height="1.2" fill="#777"/><rect x="646.0" y="65.5" width="1.2" height="1.2" fill="#777"/>
<rect x="470" y="36" width="1.2" height="1.2" fill="#777"/><rect x="470" y="39.5" width="1.2" height="1.2" fill="#777"/>
<rect x="394.7" y="35" width="8.1" height="8.3" fill="#d2c600" stroke="#111" stroke-width="0.6"/>
<text x="404.24" y="42.50" font-size="10.17" fill="#c0c0c0" textLength="44.08" lengthAdjust="spacingAndGlyphs" style="font-family:'Liberation Sans',sans-serif;" >Edge.Cuts</text>
<g><line x1="388" y1="60" x2="401" y2="60" stroke="#333" stroke-width="1"/><line x1="394.5" y1="57" x2="394.5" y2="63" stroke="#e02020" stroke-width="1.4"/><rect x="385" y="62.5" width="19" height="2.6" fill="#e02020"/><rect x="385" y="66" width="19" height="2.6" fill="#20a030"/><rect x="393.3" y="66" width="2.6" height="7" fill="#20a030"/></g>
<rect x="28.0" y="30" width="1" height="19" fill="#262626"/>
<rect x="56.8" y="30" width="1" height="19" fill="#262626"/>
<rect x="107.5" y="30" width="1" height="19" fill="#262626"/>
<rect x="159.4" y="30" width="1" height="19" fill="#262626"/>
<rect x="210.3" y="30" width="1" height="19" fill="#262626"/>
<rect x="307.9" y="30" width="1" height="19" fill="#262626"/>
<rect x="336.0" y="30" width="1" height="19" fill="#262626"/>
<rect x="386.8" y="30" width="1" height="19" fill="#262626"/>
<rect x="553.4" y="30" width="1" height="19" fill="#262626"/>
<g><path d="M8,39 L10,35 L18,35 L20,39 L21,46 L7,46 Z" fill="#d8d8d8"/><rect x="7" y="42" width="14" height="4.5" fill="#c4c4c4"/><path d="M11.5,31 L16.5,31 L16.5,35 L19,35 L14,40 L9,35 L11.5,35 Z" fill="#d4cc30"/></g>
<g><path d="M35,31.6 L45,31.6 L50,36.5 L50,47 L35,47 Z" fill="#f2f2f2"/><line x1="39" y1="33" x2="39" y2="46" stroke="#333" stroke-width="0.9"/><line x1="36" y1="40" x2="49" y2="40" stroke="#555" stroke-width="0.7"/><rect x="42" y="44" width="7" height="2.5" fill="#333"/></g>
<g><rect x="64" y="33" width="14" height="13" fill="#f0f0f0"/><line x1="66" y1="46" x2="77" y2="33" stroke="#111" stroke-width="2.2"/><rect x="64.5" y="32" width="2.6" height="2.6" fill="#1a9a2a"/><rect x="69" y="32" width="2.6" height="2.6" fill="#1a9a2a"/><rect x="64.5" y="44" width="2.6" height="2.6" fill="#1a9a2a"/><rect x="69" y="44" width="2.6" height="2.6" fill="#1a9a2a"/><rect x="74" y="44" width="2.6" height="2.6" fill="#1a9a2a"/><line x1="76" y1="32.5" x2="78" y2="34.5" stroke="#d07070" stroke-width="1.5"/></g>
<g><rect x="86" y="35" width="15" height="10" fill="#f0f0f0"/><circle cx="91" cy="35.5" r="4.5" fill="#8ab0d8" stroke="#c8d8f0" stroke-width="1"/><rect x="97" y="32" width="2.6" height="2.6" fill="#1a9a2a"/><rect x="87.5" y="44" width="2.6" height="2.6" fill="#1a9a2a"/><rect x="91.5" y="44" width="2.6" height="2.6" fill="#1a9a2a"/><rect x="96" y="44" width="2.6" height="2.6" fill="#1a9a2a"/></g>
<path d="M115,37.5 L120,33 L120,35.5 Q127.5,35.5 127.5,41 Q127.5,45.5 123,46 Q125,42 120,40.5 L120,42.5 Z" fill="#e8c020"/>
<path d="M151.5,37.5 L146.5,33 L146.5,35.5 Q139,35.5 139,41 Q139,45.5 143.5,46 Q141.5,42 146.5,40.5 L146.5,42.5 Z" fill="#c8e0b0"/>
<g><rect x="170" y="32" width="8" height="5" fill="#f0f0f0"/><rect x="166.5" y="37" width="14.3" height="6.5" fill="#e8e8e8"/><rect x="168.5" y="38.5" width="10" height="2" fill="#333"/><rect x="168.5" y="43.5" width="10" height="2.5" fill="#bbb"/></g>
<g><rect x="187.5" y="32.5" width="17.5" height="4" fill="#5a5a30" stroke="#888860" stroke-width="0.6"/><rect x="190" y="36" width="13" height="10" fill="#2a3040"/><rect x="192" y="35" width="9" height="11" fill="#ececec"/><path d="M194,38 l4,2 l-4,2 Z" fill="#aaa"/></g>
<circle cx="224" cy="36.6" r="4.3" fill="none" stroke="#111" stroke-width="1.5"/><line x1="227.2" y1="39.8" x2="232" y2="45" stroke="#111" stroke-width="1.8"/>
<path d="M221.5,36.6 h5 M224,34.1 v5" stroke="#111" stroke-width="1.4"/>
<circle cx="246.9" cy="36.6" r="4.3" fill="none" stroke="#111" stroke-width="1.5"/><line x1="250.1" y1="39.8" x2="254.9" y2="45" stroke="#111" stroke-width="1.8"/>
<path d="M244.4,36.6 h5" stroke="#111" stroke-width="1.4"/>
<circle cx="291.7" cy="36.6" r="4.3" fill="none" stroke="#111" stroke-width="1.5"/><line x1="294.9" y1="39.8" x2="299.7" y2="45" stroke="#111" stroke-width="1.8"/>
<path d="M291.7,34 v11 M285.7,34 v2 M285.7,40 v5" stroke="#111" stroke-width="1.2"/>
<path d="M275,39.4 A5.2,5.2 0 1 1 272,34.6" fill="none" stroke="#111" stroke-width="1.5"/><path d="M272.5,40 L277.5,40 L275,44 Z" fill="#111"/>
<g><rect x="314.2" y="32" width="14" height="13.5" fill="#e8ecf0"/><circle cx="320.5" cy="38" r="4.5" fill="#9ab8e0" stroke="#5a80c0" stroke-width="1"/><line x1="324" y1="42" x2="329" y2="46" stroke="#888" stroke-width="1.6"/></g>
<g><path d="M341.7,31 L354,31 L358.6,35.5 L358.6,47.8 L341.7,47.8 Z" fill="#f2f2f2"/><path d="M345,33 L355,40 M345,40 L353,33.5" stroke="#d03030" stroke-width="1"/><text x="342.3" y="47.5" font-size="7" fill="#2a8a3a" stroke="#1a5a2a" stroke-width="0.4" style="font-family:'Liberation Serif',serif;font-weight:bold" textLength="16" lengthAdjust="spacingAndGlyphs">NET</text></g>
<g><ellipse cx="372" cy="41" rx="4.8" ry="4.8" fill="#c82020"/><circle cx="370" cy="40" r="0.9" fill="#111"/><circle cx="373.5" cy="43" r="0.9" fill="#111"/><path d="M371,39 L374,42 L380.5,34" fill="none" stroke="#20a040" stroke-width="2"/></g>
<g><rect x="480" y="30.7" width="16" height="16" fill="#d2c800"/><path d="M480,38.8 h6" stroke="#7a1010" stroke-width="1.5"/><path d="M486,47 v-7 L495,31" fill="none" stroke="#8a1a10" stroke-width="2.5"/><path d="M488,38.8 h8" stroke="#5a1a50" stroke-width="1.5"/></g>
<g><rect x="509.5" y="33" width="14.5" height="12" fill="#f0f0f0"/><path d="M516.7,32 v14 M508.5,39 h16" stroke="#333" stroke-width="1"/><rect x="511" y="31.5" width="2.6" height="2.6" fill="#1a9a2a"/><rect x="520.5" y="31.5" width="2.6" height="2.6" fill="#1a9a2a"/><rect x="508.5" y="37.7" width="2.6" height="2.6" fill="#1a9a2a"/><rect x="522.5" y="37.7" width="2.6" height="2.6" fill="#1a9a2a"/><rect x="511" y="44.5" width="2.6" height="2.6" fill="#1a9a2a"/><rect x="520.5" y="44.5" width="2.6" height="2.6" fill="#1a9a2a"/></g>
<g><path d="M531,35 h17 M531,43 h17" stroke="#20a030" stroke-width="2"/><path d="M535,31 v16 M544,31 v16" stroke="#d02020" stroke-width="2"/><rect x="534" y="34" width="2" height="2" fill="#fff"/><rect x="543" y="42" width="2" height="2" fill="#fff"/></g>
<g><path d="M567.5,31 L575,38.7 L567.5,46.4 L560,38.7 Z" fill="#e8c010" stroke="#222" stroke-width="1"/><path d="M565.5,35 v7 M569.5,35.5 v7" stroke="#111" stroke-width="1.2"/><path d="M564,36.5 l1.5,-2 l1.5,2 M568,41 l1.5,2 l1.5,-2" fill="none" stroke="#111" stroke-width="1"/></g>
<rect x="3" y="219.6" width="18" height="1" fill="#505050"/>
<rect x="3" y="270.7" width="18" height="1" fill="#505050"/>
<rect x="3" y="299.0" width="18" height="1" fill="#505050"/>
<rect x="3" y="373.0" width="18" height="1" fill="#505050"/>
<rect x="3" y="470.3" width="18" height="1" fill="#505050"/>
<g><ellipse cx="14.5" cy="88" rx="4.5" ry="5.5" fill="#1a1a1a"/><circle cx="10" cy="93" r="5" fill="none" stroke="#d83020" stroke-width="1.6"/><line x1="6.5" y1="96.5" x2="13.5" y2="89.5" stroke="#d83020" stroke-width="1.4"/></g>
<rect x="2.0" y="105.0" width="20" height="20" fill="#e2e2e2" stroke="#f4f4f4" stroke-width="0.6"/>
<rect x="5.0" y="108.0" width="1.5" height="1.5" fill="#333"/><rect x="5.0" y="111.6" width="1.5" height="1.5" fill="#333"/><rect x="5.0" y="115.2" width="1.5" height="1.5" fill="#333"/><rect x="5.0" y="118.8" width="1.5" height="1.5" fill="#333"/><rect x="8.6" y="108.0" width="1.5" height="1.5" fill="#333"/><rect x="8.6" y="111.6" width="1.5" height="1.5" fill="#333"/><rect x="8.6" y="115.2" width="1.5" height="1.5" fill="#333"/><rect x="8.6" y="118.8" width="1.5" height="1.5" fill="#333"/><rect x="12.2" y="108.0" width="1.5" height="1.5" fill="#333"/><rect x="12.2" y="111.6" width="1.5" height="1.5" fill="#333"/><rect x="12.2" y="115.2" width="1.5" height="1.5" fill="#333"/><rect x="12.2" y="118.8" width="1.5" height="1.5" fill="#333"/><rect x="15.8" y="108.0" width="1.5" height="1.5" fill="#333"/><rect x="15.8" y="111.6" width="1.5" height="1.5" fill="#333"/><rect x="15.8" y="115.2" width="1.5" height="1.5" fill="#333"/><rect x="15.8" y="118.8" width="1.5" height="1.5" fill="#333"/>
<g><path d="M5,130 v14 h14" fill="none" stroke="#222" stroke-width="1.1"/><line x1="5" y1="144" x2="17" y2="132" stroke="#222" stroke-width="0.8"/><circle cx="17" cy="131.5" r="1.8" fill="#e03020"/><text x="8" y="135" font-size="6" fill="#222" style="font-family:'Liberation Serif',serif">r</text><text x="14" y="141" font-size="5.5" fill="#222" style="font-family:'Liberation Serif',serif">&#966;</text></g>
<text x="6.74" y="161.50" font-size="9.88" fill="#1a1a1a" textLength="10.45" lengthAdjust="spacingAndGlyphs" style="font-family:'Liberation Sans',sans-serif;font-weight:bold;" >In</text>
<path d="M4,164.5 h16 M4,164.5 l2,-1.5 M4,164.5 l2,1.5 M20,164.5 l-2,-1.5 M20,164.5 l-2,1.5" stroke="#222" stroke-width="0.9" fill="none"/>
<rect x="2.0" y="172.5" width="20" height="18" fill="#e2e2e2" stroke="#f4f4f4" stroke-width="0.6"/>
<text x="3.39" y="181.00" font-size="7.99" fill="#1a1a1a" textLength="16.65" lengthAdjust="spacingAndGlyphs" style="font-family:'Liberation Sans',sans-serif;font-weight:bold;" >mm</text>
<path d="M5,185.5 h14 M5,185.5 l2,-1.5 M5,185.5 l2,1.5 M19,185.5 l-2,-1.5 M19,185.5 l-2,1.5" stroke="#222" stroke-width="0.9" fill="none"/>
<g><path d="M6,202 h5 M8.5,199.5 v5" stroke="#555" stroke-width="0.8"/><path d="M10,204 L10,212 L12,210 L13.5,213 L14.5,212.5 L13,209.5 L16,209.5 Z" fill="#f4f4f4" stroke="#444" stroke-width="0.5"/></g>
<rect x="2.0" y="224.2" width="20" height="19.5" fill="#e2e2e2" stroke="#f4f4f4" stroke-width="0.6"/>
<g><path d="M6,229 L18,239 M18,229 L6,239" stroke="#fff" stroke-width="1.2"/><circle cx="6" cy="228.5" r="1.8" fill="#c8b818" stroke="#777" stroke-width="0.4"/><circle cx="17.5" cy="230" r="1.8" fill="#c8b818" stroke="#777" stroke-width="0.4"/><circle cx="7" cy="239.5" r="1.8" fill="#c8b818" stroke="#777" stroke-width="0.4"/><circle cx="17" cy="238.5" r="1.8" fill="#c8b818" stroke="#777" stroke-width="0.4"/></g>
<rect x="2.0" y="248.1" width="20" height="18.5" fill="#e2e2e2" stroke="#f4f4f4" stroke-width="0.6"/>
<g><rect x="9" y="250.5" width="6.5" height="13" fill="#f8f8f8" stroke="#222" stroke-width="1"/><rect x="10.5" y="253" width="3.5" height="7" fill="#333"/><line x1="5" y1="252" x2="9" y2="252" stroke="#d04040" stroke-width="0.7"/><line x1="15.5" y1="252" x2="19.5" y2="252" stroke="#d04040" stroke-width="0.7"/><line x1="5" y1="255" x2="9" y2="255" stroke="#d04040" stroke-width="0.7"/><line x1="15.5" y1="255" x2="19.5" y2="255" stroke="#d04040" stroke-width="0.7"/><line x1="5" y1="258" x2="9" y2="258" stroke="#d04040" stroke-width="0.7"/><line x1="15.5" y1="258" x2="19.5" y2="258" stroke="#d04040" stroke-width="0.7"/><line x1="5" y1="261" x2="9" y2="261" stroke="#d04040" stroke-width="0.7"/><line x1="15.5" y1="261" x2="19.5" y2="261" stroke="#d04040" stroke-width="0.7"/></g>
<rect x="2.0" y="274.9" width="20" height="19.5" fill="#e2e2e2" stroke="#f4f4f4" stroke-width="0.6"/>
<g><path d="M5,279 v6 Q5,291 12,291 Q19,291 19,285 v-6" fill="none" stroke="#1a7a2a" stroke-width="2.6"/><path d="M9,276.5 L15,282.5 M15,276.5 L9,282.5" stroke="#e02020" stroke-width="1.8"/></g>
<rect x="2.5" y="304.8" width="19" height="17.6" fill="#2a7a34"/><path d="M6,318 l8,-9" stroke="#3a8a44" stroke-width="1"/>
<rect x="2.0" y="327.0" width="20" height="19" fill="#e2e2e2" stroke="#f4f4f4" stroke-width="0.6"/>
<g><circle cx="8" cy="333" r="2.4" fill="none" stroke="#1a8a2a" stroke-width="1.6"/><path d="M10,333 h3 L17,339" fill="none" stroke="#1a8a2a" stroke-width="2"/></g>
<path d="M6,358 Q8,352 13,353 Q18,355 18,363" fill="none" stroke="#2a8a3a" stroke-width="2.5"/><path d="M5,363 Q10,358 14,366" fill="none" stroke="#2a8a3a" stroke-width="2"/>
<line x1="4" y1="395.6" x2="20" y2="379.6" stroke="#e0e0e0" stroke-width="1.4"/>
<line x1="4" y1="417.7" x2="20" y2="401.7" stroke="#e0e0e0" stroke-width="1.4"/>
<line x1="4" y1="439.7" x2="20" y2="423.7" stroke="#e0e0e0" stroke-width="1.4"/>
<line x1="4" y1="463.2" x2="20" y2="447.2" stroke="#e0e0e0" stroke-width="1.4"/>
<circle cx="10" cy="387" r="4" fill="#2a8a3a"/>
<circle cx="12" cy="409.7" r="3" fill="#ddd"/><path d="M6,403 L10,407" stroke="#2a8a3a" stroke-width="3"/><path d="M14,412 L18,416" stroke="#d02020" stroke-width="3"/>
<path d="M11,424 v9" stroke="#d02020" stroke-width="2.5"/><path d="M5,433 h10" stroke="#d02020" stroke-width="2"/><path d="M12,434 h9" stroke="#2a8a3a" stroke-width="1"/>
<path d="M6,450 L16,460" stroke="#d02020" stroke-width="2"/><path d="M8,460 Q12,450 18,452" fill="none" stroke="#2a8a3a" stroke-width="2"/>
<rect x="2.0" y="476.0" width="20" height="18" fill="#e2e2e2" stroke="#f4f4f4" stroke-width="0.6"/>
<g><path d="M4,484 L12,478 L20,482 L20,486 L4,488 Z" fill="#2a8a3a"/><rect x="4" y="487" width="16" height="4" fill="#d8c818"/><rect x="5" y="483" width="8" height="3" fill="#2040d0"/><path d="M14,482 l5,5" stroke="#d02020" stroke-width="2"/></g>
<g><rect x="5" y="501" width="14" height="15" fill="#a82020" opacity="0.85"/><path d="M7,515 L16,504 M14,503 a3,3 0 1 0 4,3" fill="none" stroke="#f0f0f0" stroke-width="2.2"/></g>
<rect x="1141" y="107.0" width="18" height="1" fill="#4a4a4a"/>
<rect x="1141" y="157.4" width="18" height="1" fill="#4a4a4a"/>
<rect x="1141" y="254.8" width="18" height="1" fill="#4a4a4a"/>
<rect x="1141" y="351.0" width="18" height="1" fill="#4a4a4a"/>
<rect x="1141" y="402.0" width="18" height="1" fill="#4a4a4a"/>
<rect x="1141" y="430.8" width="18" height="1" fill="#4a4a4a"/>
<rect x="1141" y="81.5" width="20" height="20.5" fill="#dcdcdc" stroke="#f2f2f2" stroke-width="0.6"/>
<path d="M1147,85.5 L1147,98 L1150,95 L1152.5,100 L1154.5,99 L1152,94 L1156,94 Z" fill="#f8f8f8" stroke="#555" stroke-width="0.9"/>
<g><path d="M1142,115 h17" stroke="#20a030" stroke-width="2.2"/><path d="M1146,111 v16" stroke="#d02020" stroke-width="2.2"/><path d="M1150,116 L1150,126 L1152.5,123.5 L1154.5,127.5 L1156,127 L1154,123 L1157.5,123 Z" fill="#f4f4f4" stroke="#555" stroke-width="0.6"/></g>
<rect x="1141" y="129.4" width="20" height="21" fill="#d8d8d8" stroke="#f0f0f0" stroke-width="0.6"/>
<g><path d="M1143,133 L1159,148 M1159,133 L1143,148 M1151,131 v18" stroke="#f4f4f4" stroke-width="1"/><circle cx="1147" cy="136" r="1.8" fill="#d8c818"/><path d="M1148,138 L1148,147 L1150,145 L1151.5,148.5 L1153,148 L1151.5,144.5 L1154.5,144.5 Z" fill="#f4f4f4" stroke="#555" stroke-width="0.6"/></g>
<g><rect x="1142.5" y="167" width="16" height="11.5" fill="#f2f2f2"/><rect x="1143.5" y="165" width="3.4" height="3.4" fill="#1a9a2a"/><rect x="1143.5" y="176.5" width="3.4" height="3.4" fill="#1a9a2a"/><rect x="1148.3" y="165" width="3.4" height="3.4" fill="#1a9a2a"/><rect x="1148.3" y="176.5" width="3.4" height="3.4" fill="#1a9a2a"/><rect x="1153.1" y="165" width="3.4" height="3.4" fill="#1a9a2a"/><rect x="1153.1" y="176.5" width="3.4" height="3.4" fill="#1a9a2a"/></g>
<path d="M1143,188 L1145,194 L1152,194 L1158,204" fill="none" stroke="#1a8a2a" stroke-width="2.2"/>
<rect x="1141" y="206.5" width="20" height="20" fill="#2a7a34"/><path d="M1144,222 L1144,211 L1158,209 L1158,224 Z" fill="none" stroke="#f0f0f0" stroke-width="0.8"/><circle cx="1149" cy="217" r="3.5" fill="#f0f0f0"/><path d="M1151,220 L1158,225" stroke="#f0f0f0" stroke-width="2"/>
<rect x="1141" y="228.5" width="20" height="20" fill="#2a7a34"/><rect x="1143" y="230.5" width="16" height="16" fill="#3a8a40"/><circle cx="1151" cy="238.5" r="5.5" fill="#c83030" stroke="#e02020" stroke-width="1.2"/><line x1="1147.5" y1="242" x2="1154.5" y2="235" stroke="#f0c0c0" stroke-width="1.4"/>
<line x1="1142" y1="277" x2="1159" y2="261" stroke="#1a30d0" stroke-width="1.6" stroke-dasharray="2.5,1.5"/>
<circle cx="1150.5" cy="290.6" r="6.8" fill="none" stroke="#1a30d0" stroke-width="1.6"/><circle cx="1150.5" cy="290.6" r="1.2" fill="#2a9a2a"/>
<path d="M1144,308 Q1155,308 1157,319" fill="none" stroke="#1a30d0" stroke-width="1.6"/><circle cx="1144" cy="308" r="1.5" fill="#2a9a2a"/><circle cx="1157" cy="319" r="1.5" fill="#2a9a2a"/><circle cx="1144" cy="319" r="1.5" fill="#2a9a2a"/>
<text x="1144" y="342" font-size="15" fill="#222" style="font-family:'Liberation Serif',serif">T</text>
<path d="M1142,360 v12 M1159,360 v12 M1142,366 h17" stroke="#222" stroke-width="0.9"/><text x="1147.5" y="364" font-size="6" fill="#222" style="font-family:'Liberation Sans',sans-serif">N</text>
<g><path d="M1150.5,381.0 l6,6 l-6,6 l-6,-6 Z" fill="#e0c810" stroke="#111" stroke-width="0.6"/><path d="M1150.5,381.0 l6,6 h-6 Z M1150.5,393.0 l-6,-6 h6 Z" fill="#111"/></g>
<g><path d="M1150.5,436.0 l6,6 l-6,6 l-6,-6 Z" fill="#e0c810" stroke="#111" stroke-width="0.6"/><path d="M1150.5,436.0 l6,6 h-6 Z M1150.5,448.0 l-6,-6 h6 Z" fill="#111"/></g>
<path d="M1142,437 v12 h17" fill="none" stroke="#222" stroke-width="0.8"/>
<path d="M1146,412 h9 l-1,11 h-7 Z" fill="#eee"/><rect x="1145" y="410" width="11" height="2" fill="#ddd"/>
<rect x="1143.0" y="454.0" width="1.2" height="1.2" fill="#555"/><rect x="1143.0" y="458.0" width="1.2" height="1.2" fill="#555"/><rect x="1143.0" y="462.0" width="1.2" height="1.2" fill="#555"/><rect x="1143.0" y="466.0" width="1.2" height="1.2" fill="#555"/><rect x="1147.0" y="454.0" width="1.2" height="1.2" fill="#555"/><rect x="1147.0" y="458.0" width="1.2" height="1.2" fill="#555"/><rect x="1147.0" y="462.0" width="1.2" height="1.2" fill="#555"/><rect x="1147.0" y="466.0" width="1.2" height="1.2" fill="#555"/><rect x="1151.0" y="454.0" width="1.2" height="1.2" fill="#555"/><rect x="1151.0" y="458.0" width="1.2" height="1.2" fill="#555"/><rect x="1151.0" y="462.0" width="1.2" height="1.2" fill="#555"/><rect x="1151.0" y="466.0" width="1.2" height="1.2" fill="#555"/><rect x="1155.0" y="454.0" width="1.2" height="1.2" fill="#555"/><rect x="1155.0" y="458.0" width="1.2" height="1.2" fill="#555"/><rect x="1155.0" y="462.0" width="1.2" height="1.2" fill="#555"/><rect x="1155.0" y="466.0" width="1.2" height="1.2" fill="#555"/><rect x="1159.0" y="454.0" width="1.2" height="1.2" fill="#555"/><rect x="1159.0" y="458.0" width="1.2" height="1.2" fill="#555"/><rect x="1159.0" y="462.0" width="1.2" height="1.2" fill="#555"/><rect x="1159.0" y="466.0" width="1.2" height="1.2" fill="#555"/>
<rect x="1147" y="459" width="3" height="3" fill="#e02020"/>
<text x="1169.47" y="85.50" font-size="7.56" fill="#6a6a6a" textLength="23.80" lengthAdjust="spacingAndGlyphs" style="font-family:'Liberation Sans',sans-serif;font-weight:bold;" >Visibles</text>
<text x="1177.19" y="108.50" font-size="10.61" fill="#c0c0c0" textLength="25.48" lengthAdjust="spacingAndGlyphs" style="font-family:'Liberation Sans',sans-serif;" >Layer</text>
<text x="1210.23" y="107.00" font-size="10.61" fill="#d4d4d4" textLength="31.46" lengthAdjust="spacingAndGlyphs" style="font-family:'Liberation Sans',sans-serif;" >Render</text>
<path d="M1196.8,126.3 l2,2.3 l3.8,-5" fill="none" stroke="#3a3a3a" stroke-width="1.3"/>
<text x="1207.71" y="129.70" font-size="10.61" fill="#c2c2c2" textLength="50.38" lengthAdjust="spacingAndGlyphs" style="font-family:'Liberation Sans',sans-serif" >Through Via</text>
<path d="M1196.8,141.0 l2,2.3 l3.8,-5" fill="none" stroke="#3a3a3a" stroke-width="1.3"/>
<text x="1207.16" y="144.35" font-size="10.61" fill="#c2c2c2" textLength="53.48" lengthAdjust="spacingAndGlyphs" style="font-family:'Liberation Sans',sans-serif" >Bl/Buried Via</text>
<path d="M1196.8,155.6 l2,2.3 l3.8,-5" fill="none" stroke="#3a3a3a" stroke-width="1.3"/>
<text x="1207.16" y="159.00" font-size="10.61" fill="#c2c2c2" textLength="38.50" lengthAdjust="spacingAndGlyphs" style="font-family:'Liberation Sans',sans-serif" >Micro Via</text>
<path d="M1196.8,170.2 l2,2.3 l3.8,-5" fill="none" stroke="#3a3a3a" stroke-width="1.3"/>
<text x="1207.16" y="173.65" font-size="10.61" fill="#c2c2c2" textLength="45.91" lengthAdjust="spacingAndGlyphs" style="font-family:'Liberation Sans',sans-serif" >Non Plated</text>
<path d="M1196.8,184.9 l2,2.3 l3.8,-5" fill="none" stroke="#3a3a3a" stroke-width="1.3"/>
<text x="1207.16" y="188.30" font-size="10.61" fill="#c2c2c2" textLength="36.62" lengthAdjust="spacingAndGlyphs" style="font-family:'Liberation Sans',sans-serif" >Ratsnest</text>
<path d="M1196.8,199.6 l2,2.3 l3.8,-5" fill="none" stroke="#3a3a3a" stroke-width="1.3"/>
<text x="1207.16" y="202.95" font-size="10.61" fill="#c2c2c2" textLength="45.39" lengthAdjust="spacingAndGlyphs" style="font-family:'Liberation Sans',sans-serif" >Pads Front</text>
<path d="M1196.8,214.2 l2,2.3 l3.8,-5" fill="none" stroke="#3a3a3a" stroke-width="1.3"/>
<text x="1207.16" y="217.60" font-size="10.61" fill="#c2c2c2" textLength="44.36" lengthAdjust="spacingAndGlyphs" style="font-family:'Liberation Sans',sans-serif" >Pads Back</text>
<path d="M1196.8,228.9 l2,2.3 l3.8,-5" fill="none" stroke="#3a3a3a" stroke-width="1.3"/>
<text x="1207.71" y="232.25" font-size="10.61" fill="#c2c2c2" textLength="41.25" lengthAdjust="spacingAndGlyphs" style="font-family:'Liberation Sans',sans-serif" >Text Front</text>
<path d="M1196.8,243.5 l2,2.3 l3.8,-5" fill="none" stroke="#3a3a3a" stroke-width="1.3"/>
<text x="1207.71" y="246.90" font-size="10.61" fill="#c2c2c2" textLength="40.22" lengthAdjust="spacingAndGlyphs" style="font-family:'Liberation Sans',sans-serif" >Text Back</text>
<text x="1207.16" y="261.55" font-size="10.61" fill="#c2c2c2" textLength="48.83" lengthAdjust="spacingAndGlyphs" style="font-family:'Liberation Sans',sans-serif" >Hidden Text</text>
<path d="M1196.8,272.8 l2,2.3 l3.8,-5" fill="none" stroke="#3a3a3a" stroke-width="1.3"/>
<text x="1207.90" y="276.20" font-size="10.61" fill="#c2c2c2" textLength="34.04" lengthAdjust="spacingAndGlyphs" style="font-family:'Liberation Sans',sans-serif" >Anchors</text>
<path d="M1196.8,287.4 l2,2.3 l3.8,-5" fill="none" stroke="#3a3a3a" stroke-width="1.3"/>
<text x="1207.44" y="290.85" font-size="10.61" fill="#c2c2c2" textLength="17.53" lengthAdjust="spacingAndGlyphs" style="font-family:'Liberation Sans',sans-serif" >Grid</text>
<path d="M1196.8,302.1 l2,2.3 l3.8,-5" fill="none" stroke="#3a3a3a" stroke-width="1.3"/>
<text x="1207.16" y="305.50" font-size="10.61" fill="#c2c2c2" textLength="54.15" lengthAdjust="spacingAndGlyphs" style="font-family:'Liberation Sans',sans-serif" >No-Connects</text>
<path d="M1196.8,316.8 l2,2.3 l3.8,-5" fill="none" stroke="#3a3a3a" stroke-width="1.3"/>
<text x="1207.16" y="320.15" font-size="10.61" fill="#c2c2c2" textLength="65.49" lengthAdjust="spacingAndGlyphs" style="font-family:'Liberation Sans',sans-serif" >Footprints Front</text>
<path d="M1196.8,331.4 l2,2.3 l3.8,-5" fill="none" stroke="#3a3a3a" stroke-width="1.3"/>
<text x="1207.16" y="334.80" font-size="10.61" fill="#c2c2c2" textLength="64.47" lengthAdjust="spacingAndGlyphs" style="font-family:'Liberation Sans',sans-serif" >Footprints Back</text>
<text x="1207.85" y="349.45" font-size="10.61" fill="#c2c2c2" textLength="27.68" lengthAdjust="spacingAndGlyphs" style="font-family:'Liberation Sans',sans-serif" >Values</text>
<path d="M1196.8,360.7 l2,2.3 l3.8,-5" fill="none" stroke="#3a3a3a" stroke-width="1.3"/>
<text x="1207.16" y="364.10" font-size="10.61" fill="#c2c2c2" textLength="47.45" lengthAdjust="spacingAndGlyphs" style="font-family:'Liberation Sans',sans-serif" >References</text>
<rect x="1266" y="116" width="11" height="260" fill="#1e1e1e"/>
<text x="68.42" y="695.70" font-size="7.99" fill="#8c8640" textLength="16.05" lengthAdjust="spacingAndGlyphs" style="font-family:'Liberation Sans',sans-serif;" >Text</text>
<text x="67.81" y="705.40" font-size="7.99" fill="#8c8640" textLength="12.67" lengthAdjust="spacingAndGlyphs" style="font-family:'Liberation Sans',sans-serif;" >D1</text>
<text x="409.95" y="695.70" font-size="7.99" fill="#6e1414" textLength="23.35" lengthAdjust="spacingAndGlyphs" style="font-family:'Liberation Sans',sans-serif;" >Width</text>
<text x="409.22" y="705.40" font-size="7.99" fill="#6e1414" textLength="46.42" lengthAdjust="spacingAndGlyphs" style="font-family:'Liberation Sans',sans-serif;" >1.000 mm</text>
<text x="476.89" y="695.70" font-size="7.99" fill="#6e1414" textLength="29.16" lengthAdjust="spacingAndGlyphs" style="font-family:'Liberation Sans',sans-serif;" >Height</text>
<text x="476.92" y="705.40" font-size="7.99" fill="#6e1414" textLength="46.53" lengthAdjust="spacingAndGlyphs" style="font-family:'Liberation Sans',sans-serif;" >1.000 mm</text>
<text x="1.88" y="718.80" font-size="9.74" fill="#c8c8c8" textLength="39.14" lengthAdjust="spacingAndGlyphs" style="font-family:'Liberation Sans',sans-serif;" >U1 found</text>
<text x="721.41" y="718.80" font-size="9.16" fill="#a8a8a8" textLength="33.30" lengthAdjust="spacingAndGlyphs" style="font-family:'Liberation Sans',sans-serif;" >Z 13.75</text>
<text x="769.77" y="718.80" font-size="9.16" fill="#a8a8a8" textLength="115.96" lengthAdjust="spacingAndGlyphs" style="font-family:'Liberation Sans',sans-serif;" >X 154.600000  Y 93.000000</text>
<text x="909.02" y="718.80" font-size="9.16" fill="#a8a8a8" textLength="169.02" lengthAdjust="spacingAndGlyphs" style="font-family:'Liberation Sans',sans-serif;" >dx 10.800000  dy 8.800000  dist 13.931</text>
<text x="1126.67" y="718.80" font-size="6.98" fill="#a8a8a8" textLength="18.61" lengthAdjust="spacingAndGlyphs" style="font-family:'Liberation Sans',sans-serif;" >mm</text>
</svg>
</body></html>
